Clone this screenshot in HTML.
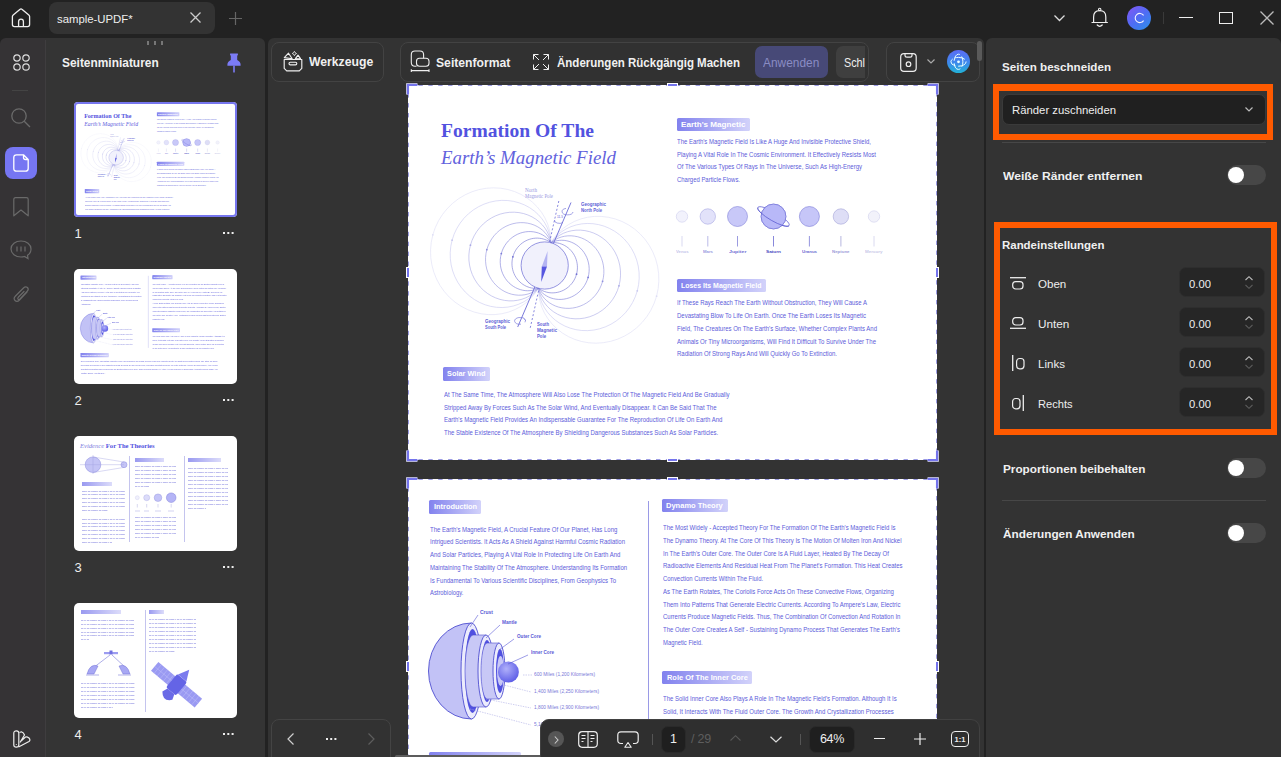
<!DOCTYPE html>
<html><head><meta charset="utf-8">
<style>
*{margin:0;padding:0;box-sizing:border-box}
html,body{width:1281px;height:757px;overflow:hidden;background:#222222;font-family:"Liberation Sans",sans-serif;color:#f2f2f2}
.a{position:absolute}
.panel{position:absolute;background:#323232}
.b{font-weight:bold}
svg{position:absolute;overflow:visible}
.tx{position:absolute;white-space:nowrap;transform-origin:0 0}
</style></head><body>
<!-- title bar -->
<div class="a" style="left:0;top:0;width:1281px;height:38px;background:#222222"></div>
<svg style="left:11px;top:8px" width="20" height="20" viewBox="0 0 20 20"><path d="M1.4 8.6 Q1.4 7.6 2.2 6.9 L8.8 1.4 Q10 0.5 11.2 1.4 L17.8 6.9 Q18.6 7.6 18.6 8.6 V16.6 Q18.6 18.6 16.6 18.6 H3.4 Q1.4 18.6 1.4 16.6 Z M7.6 18.6 V13.6 Q7.6 11.2 10 11.2 Q12.4 11.2 12.4 13.6 V18.6" fill="none" stroke="#eee" stroke-width="1.3" stroke-linejoin="round"/></svg>
<div class="a" style="left:49px;top:2px;width:166px;height:32px;background:#333;border-radius:8px"></div>
<svg style="left:190px;top:12px" width="11" height="11"><path d="M0.5 0.5 L10.5 10.5 M10.5 0.5 L0.5 10.5" stroke="#ccc" stroke-width="1.3"/></svg>
<svg style="left:229px;top:12px" width="13" height="13"><path d="M6.5 0 V13 M0 6.5 H13" stroke="#666" stroke-width="1.2"/></svg>
<svg style="left:1054px;top:15px" width="11" height="7"><path d="M0.5 0.5 L5.5 5.5 L10.5 0.5" fill="none" stroke="#ddd" stroke-width="1.3"/></svg>
<svg style="left:1090px;top:7px" width="20" height="21" viewBox="0 0 20 21"><circle cx="9.7" cy="2.4" r="1.2" fill="none" stroke="#eee" stroke-width="1.1"/><path d="M3.6 15.5 V10 Q3.6 3.6 9.7 3.6 Q15.8 3.6 15.8 10 V15.5 M2 15.5 H17.4 M7.2 18 Q9.7 20.6 12.2 18" fill="none" stroke="#eee" stroke-width="1.2" stroke-linejoin="round" stroke-linecap="round"/></svg>
<div class="a" style="left:1127px;top:6px;width:24px;height:24px;border-radius:50%;background:linear-gradient(140deg,#8656f4 0%,#4f6cf4 50%,#2a92e6 100%)"></div>
<svg style="left:1127px;top:6px" width="24" height="24"><path d="M16.6 14.6 A4.6 4.6 0 1 1 16.6 9.4" fill="none" stroke="#f4f4ff" stroke-width="1.1"/></svg>
<div class="a" style="left:1163px;top:12px;width:1px;height:12px;background:#3a3a3a"></div>
<div class="a" style="left:1179px;top:17px;width:14px;height:1.4px;background:#eee"></div>
<div class="a" style="left:1219px;top:12px;width:14px;height:12px;border:1.4px solid #eee"></div>
<svg style="left:1260px;top:11px" width="14" height="14"><path d="M0.5 0.5 L13.5 13.5 M13.5 0.5 L0.5 13.5" stroke="#bbb" stroke-width="1.3"/></svg>

<!-- left rail + thumbnail panel -->
<div class="panel" style="left:0;top:38px;width:265px;height:719px;border-radius:6px 6px 0 0;background:linear-gradient(90deg,#353335 0,#353335 45px,#343434 45px)"></div>
<div class="a" style="left:45px;top:40px;width:1px;height:717px;background:#3f3d3f"></div>

<!-- center panel -->
<div class="panel" style="left:268px;top:38px;width:716px;height:719px;background:#333;border-radius:6px 6px 0 0"></div>

<!-- right panel -->
<div class="panel" style="left:986px;top:38px;width:295px;height:719px;background:#333;border-radius:6px 6px 0 0"></div>



<div class="a" style="left:268px;top:81px;width:716px;height:676px;overflow:hidden">
<div class="a" style="left:140px;top:4px"><div class="a pg" style="left:0px;top:0px;width:529px;height:375px;background:#fff">
<div id="t1" class="tx" style="transform:scaleX(1.0040);left:33.00px;top:35.57px;font-size:19.50px;line-height:19.50px;color:#5252e0;font-family:'Liberation Serif',serif;font-weight:bold">Formation Of The</div>
<div id="t2" class="tx" style="transform:scaleX(1.0217);left:32.60px;top:64.11px;font-size:18.50px;line-height:18.50px;color:#6262dd;font-family:'Liberation Serif',serif;font-style:italic">Earth&#8217;s Magnetic Field</div>
<svg class="a" style="left:0;top:0" width="529" height="375"><path d="M142.94 157.74 L146.39 152.48 L150.53 147.63 L155.32 143.27 L160.69 139.49 L166.56 136.35 L172.86 133.93 L179.48 132.27 L186.33 131.42 L193.32 131.41 L200.32 132.25 L207.24 133.94 L213.97 136.47 L220.40 139.81 L226.44 143.92 L231.98 148.76 L236.94 154.25 L241.24 160.32 L244.81 166.89 L247.60 173.86 L249.55 181.14 L250.64 188.62 L250.84 196.18 L250.15 203.73 L248.58 211.16 L246.14 218.34 L242.89 225.19 L238.86 231.60 L234.11 237.48 L228.72 242.74 L222.77 247.32 L216.35 251.15 L209.55 254.18 L202.49 256.38 L195.26 257.71 L187.97 258.18 L180.73 257.77 L173.65 256.52 L166.84 254.44 L160.38 251.59 L154.38 248.02 L148.92 243.80 L144.06 239.00 L139.88 233.71 L136.43 228.01 L133.74 222.02 L131.85 215.83 L130.75 209.54 L130.46 203.26" fill="none" stroke="#dedef5" stroke-width="0.6"/><circle cx="248.58" cy="211.16" r="0.9" fill="#dedef5"/><path d="M142.94 157.74 L142.65 151.46 L141.55 145.17 L139.66 138.98 L136.97 132.99 L133.52 127.29 L129.34 122.00 L124.48 117.20 L119.02 112.98 L113.02 109.41 L106.56 106.56 L99.75 104.48 L92.67 103.23 L85.43 102.82 L78.14 103.29 L70.91 104.62 L63.85 106.82 L57.05 109.85 L50.63 113.68 L44.68 118.26 L39.29 123.52 L34.54 129.40 L30.51 135.81 L27.26 142.66 L24.82 149.84 L23.25 157.27 L22.56 164.82 L22.76 172.38 L23.85 179.86 L25.80 187.14 L28.59 194.11 L32.16 200.68 L36.46 206.75 L41.42 212.24 L46.96 217.08 L53.00 221.19 L59.43 224.53 L66.16 227.06 L73.08 228.75 L80.08 229.59 L87.07 229.58 L93.92 228.73 L100.54 227.07 L106.84 224.65 L112.71 221.51 L118.08 217.73 L122.87 213.37 L127.01 208.52 L130.46 203.26" fill="none" stroke="#dedef5" stroke-width="0.6"/><circle cx="24.82" cy="149.84" r="0.9" fill="#dedef5"/><path d="M142.94 157.74 L145.96 153.72 L149.52 150.04 L153.58 146.76 L158.08 143.95 L162.96 141.68 L168.16 139.97 L173.61 138.89 L179.22 138.46 L184.92 138.69 L190.62 139.61 L196.24 141.20 L201.68 143.47 L206.88 146.38 L211.74 149.91 L216.20 154.01 L220.18 158.64 L223.63 163.72 L226.48 169.20 L228.69 174.99 L230.23 181.03 L231.07 187.22 L231.19 193.49 L230.60 199.73 L229.29 205.87 L227.28 211.82 L224.61 217.50 L221.31 222.82 L217.44 227.72 L213.04 232.13 L208.18 235.99 L202.93 239.25 L197.38 241.87 L191.59 243.81 L185.67 245.07 L179.68 245.63 L173.73 245.48 L167.89 244.66 L162.24 243.17 L156.87 241.05 L151.85 238.35 L147.24 235.11 L143.11 231.40 L139.50 227.29 L136.46 222.84 L134.02 218.13 L132.20 213.24 L131.01 208.26 L130.46 203.26" fill="none" stroke="#c8c8f0" stroke-width="0.6"/><circle cx="229.29" cy="205.87" r="0.9" fill="#c8c8f0"/><path d="M142.94 157.74 L142.39 152.74 L141.20 147.76 L139.38 142.87 L136.94 138.16 L133.90 133.71 L130.29 129.60 L126.16 125.89 L121.55 122.65 L116.53 119.95 L111.16 117.83 L105.51 116.34 L99.67 115.52 L93.72 115.37 L87.73 115.93 L81.81 117.19 L76.02 119.13 L70.47 121.75 L65.22 125.01 L60.36 128.87 L55.96 133.28 L52.09 138.18 L48.79 143.50 L46.12 149.18 L44.11 155.13 L42.80 161.27 L42.21 167.51 L42.33 173.78 L43.17 179.97 L44.71 186.01 L46.92 191.80 L49.77 197.28 L53.22 202.36 L57.20 206.99 L61.66 211.09 L66.52 214.62 L71.72 217.53 L77.16 219.80 L82.78 221.39 L88.48 222.31 L94.18 222.54 L99.79 222.11 L105.24 221.03 L110.44 219.32 L115.32 217.05 L119.82 214.24 L123.88 210.96 L127.44 207.28 L130.46 203.26" fill="none" stroke="#c8c8f0" stroke-width="0.6"/><circle cx="44.11" cy="155.13" r="0.9" fill="#c8c8f0"/><path d="M142.94 157.74 L145.55 154.90 L148.56 152.32 L151.92 150.08 L155.59 148.20 L159.54 146.73 L163.70 145.72 L168.03 145.18 L172.47 145.13 L176.95 145.61 L181.41 146.60 L185.78 148.10 L190.01 150.12 L194.03 152.63 L197.79 155.60 L201.21 159.01 L204.27 162.80 L206.90 166.95 L209.06 171.39 L210.73 176.07 L211.88 180.93 L212.48 185.90 L212.53 190.92 L212.02 195.93 L210.96 200.85 L209.36 205.63 L207.25 210.19 L204.65 214.49 L201.59 218.46 L198.13 222.05 L194.31 225.23 L190.18 227.94 L185.81 230.17 L181.25 231.88 L176.56 233.06 L171.82 233.70 L167.08 233.81 L162.41 233.39 L157.88 232.46 L153.54 231.04 L149.44 229.16 L145.65 226.86 L142.20 224.19 L139.14 221.19 L136.49 217.92 L134.28 214.43 L132.54 210.79 L131.26 207.04 L130.46 203.26" fill="none" stroke="#aaaae6" stroke-width="0.6"/><circle cx="210.96" cy="200.85" r="0.9" fill="#aaaae6"/><path d="M142.94 157.74 L142.14 153.96 L140.86 150.21 L139.12 146.57 L136.91 143.08 L134.26 139.81 L131.20 136.81 L127.75 134.14 L123.96 131.84 L119.86 129.96 L115.52 128.54 L110.99 127.61 L106.32 127.19 L101.58 127.30 L96.84 127.94 L92.15 129.12 L87.59 130.83 L83.22 133.06 L79.09 135.77 L75.27 138.95 L71.81 142.54 L68.75 146.51 L66.15 150.81 L64.04 155.37 L62.44 160.15 L61.38 165.07 L60.87 170.08 L60.92 175.10 L61.52 180.07 L62.67 184.93 L64.34 189.61 L66.50 194.05 L69.13 198.20 L72.19 201.99 L75.61 205.40 L79.37 208.37 L83.39 210.88 L87.62 212.90 L91.99 214.40 L96.45 215.39 L100.93 215.87 L105.37 215.82 L109.70 215.28 L113.86 214.27 L117.81 212.80 L121.48 210.92 L124.84 208.68 L127.85 206.10 L130.46 203.26" fill="none" stroke="#aaaae6" stroke-width="0.6"/><circle cx="62.44" cy="160.15" r="0.9" fill="#aaaae6"/><path d="M142.94 157.74 L145.19 155.95 L147.70 154.37 L150.43 153.04 L153.37 152.00 L156.48 151.26 L159.71 150.86 L163.04 150.80 L166.42 151.11 L169.81 151.79 L173.16 152.85 L176.43 154.28 L179.57 156.07 L182.54 158.22 L185.30 160.69 L187.80 163.47 L190.02 166.53 L191.93 169.84 L193.48 173.35 L194.66 177.03 L195.46 180.83 L195.85 184.71 L195.83 188.63 L195.40 192.52 L194.57 196.36 L193.33 200.08 L191.71 203.65 L189.74 207.03 L187.42 210.17 L184.80 213.03 L181.90 215.60 L178.78 217.82 L175.46 219.70 L171.99 221.20 L168.41 222.31 L164.78 223.04 L161.13 223.37 L157.51 223.31 L153.97 222.87 L150.55 222.08 L147.29 220.94 L144.22 219.48 L141.39 217.74 L138.81 215.74 L136.51 213.52 L134.52 211.12 L132.84 208.59 L131.49 205.95 L130.46 203.26" fill="none" stroke="#9090de" stroke-width="0.6"/><circle cx="194.57" cy="196.36" r="0.9" fill="#9090de"/><path d="M142.94 157.74 L141.91 155.05 L140.56 152.41 L138.88 149.88 L136.89 147.48 L134.59 145.26 L132.01 143.26 L129.18 141.52 L126.11 140.06 L122.85 138.92 L119.43 138.13 L115.89 137.69 L112.27 137.63 L108.62 137.96 L104.99 138.69 L101.41 139.80 L97.94 141.30 L94.62 143.18 L91.50 145.40 L88.60 147.97 L85.98 150.83 L83.66 153.97 L81.69 157.35 L80.07 160.92 L78.83 164.64 L78.00 168.48 L77.57 172.37 L77.55 176.29 L77.94 180.17 L78.74 183.97 L79.92 187.65 L81.47 191.16 L83.38 194.47 L85.60 197.53 L88.10 200.31 L90.86 202.78 L93.83 204.93 L96.97 206.72 L100.24 208.15 L103.59 209.21 L106.98 209.89 L110.36 210.20 L113.69 210.14 L116.92 209.74 L120.03 209.00 L122.97 207.96 L125.70 206.63 L128.21 205.05 L130.46 203.26" fill="none" stroke="#9090de" stroke-width="0.6"/><circle cx="78.83" cy="164.64" r="0.9" fill="#9090de"/><path d="M142.94 157.74 L144.87 156.87 L146.94 156.17 L149.13 155.66 L151.41 155.35 L153.78 155.25 L156.19 155.39 L158.64 155.76 L161.09 156.38 L163.51 157.25 L165.88 158.37 L168.17 159.73 L170.35 161.32 L172.40 163.15 L174.28 165.18 L175.97 167.42 L177.46 169.83 L178.72 172.39 L179.73 175.08 L180.49 177.88 L180.97 180.75 L181.18 183.67 L181.10 186.60 L180.74 189.52 L180.10 192.39 L179.19 195.19 L178.01 197.88 L176.58 200.45 L174.91 202.85 L173.03 205.08 L170.96 207.10 L168.71 208.90 L166.32 210.46 L163.82 211.78 L161.22 212.83 L158.56 213.62 L155.88 214.15 L153.19 214.41 L150.52 214.42 L147.92 214.17 L145.39 213.68 L142.97 212.97 L140.67 212.04 L138.52 210.92 L136.53 209.64 L134.73 208.20 L133.11 206.65 L131.68 204.99 L130.46 203.26" fill="none" stroke="#7c7cd8" stroke-width="0.6"/><circle cx="180.10" cy="192.39" r="0.9" fill="#7c7cd8"/><path d="M142.94 157.74 L141.72 156.01 L140.29 154.35 L138.67 152.80 L136.87 151.36 L134.88 150.08 L132.73 148.96 L130.43 148.03 L128.01 147.32 L125.48 146.83 L122.88 146.58 L120.21 146.59 L117.52 146.85 L114.84 147.38 L112.18 148.17 L109.58 149.22 L107.08 150.54 L104.69 152.10 L102.44 153.90 L100.37 155.92 L98.49 158.15 L96.82 160.55 L95.39 163.12 L94.21 165.81 L93.30 168.61 L92.66 171.48 L92.30 174.40 L92.22 177.33 L92.43 180.25 L92.91 183.12 L93.67 185.92 L94.68 188.61 L95.94 191.17 L97.43 193.58 L99.12 195.82 L101.00 197.85 L103.05 199.68 L105.23 201.27 L107.52 202.63 L109.89 203.75 L112.31 204.62 L114.76 205.24 L117.21 205.61 L119.62 205.75 L121.99 205.65 L124.27 205.34 L126.46 204.83 L128.53 204.13 L130.46 203.26" fill="none" stroke="#7c7cd8" stroke-width="0.6"/><circle cx="93.30" cy="168.61" r="0.9" fill="#7c7cd8"/><path d="M142.94 157.74 L144.61 157.61 L146.33 157.62 L148.08 157.75 L149.84 158.03 L151.62 158.45 L153.38 159.02 L155.12 159.73 L156.82 160.60 L158.48 161.62 L160.06 162.78 L161.57 164.09 L162.98 165.53 L164.28 167.09 L165.46 168.78 L166.51 170.57 L167.41 172.46 L168.15 174.43 L168.73 176.47 L169.14 178.56 L169.38 180.69 L169.44 182.83 L169.31 184.98 L169.01 187.12 L168.53 189.22 L167.87 191.28 L167.04 193.27 L166.05 195.18 L164.91 197.00 L163.62 198.71 L162.20 200.30 L160.66 201.76 L159.02 203.07 L157.28 204.24 L155.47 205.25 L153.59 206.10 L151.67 206.78 L149.73 207.30 L147.77 207.65 L145.81 207.84 L143.87 207.88 L141.96 207.75 L140.10 207.48 L138.29 207.07 L136.55 206.53 L134.89 205.87 L133.32 205.10 L131.84 204.22 L130.46 203.26" fill="none" stroke="#7070d2" stroke-width="0.6"/><circle cx="168.53" cy="189.22" r="0.9" fill="#7070d2"/><path d="M142.94 157.74 L141.56 156.78 L140.08 155.90 L138.51 155.13 L136.85 154.47 L135.11 153.93 L133.30 153.52 L131.44 153.25 L129.53 153.12 L127.59 153.16 L125.63 153.35 L123.67 153.70 L121.73 154.22 L119.81 154.90 L117.93 155.75 L116.12 156.76 L114.38 157.93 L112.74 159.24 L111.20 160.70 L109.78 162.29 L108.49 164.00 L107.35 165.82 L106.36 167.73 L105.53 169.72 L104.87 171.78 L104.39 173.88 L104.09 176.02 L103.96 178.17 L104.02 180.31 L104.26 182.44 L104.67 184.53 L105.25 186.57 L105.99 188.54 L106.89 190.43 L107.94 192.22 L109.12 193.91 L110.42 195.47 L111.83 196.91 L113.34 198.22 L114.92 199.38 L116.58 200.40 L118.28 201.27 L120.02 201.98 L121.78 202.55 L123.56 202.97 L125.32 203.25 L127.07 203.38 L128.79 203.39 L130.46 203.26" fill="none" stroke="#7070d2" stroke-width="0.6"/><circle cx="104.87" cy="171.78" r="0.9" fill="#7070d2"/><path d="M163.0 117.5 L109.7 242.0" stroke="#6a6ad6" stroke-width="0.9"/><path d="M150.8 116.0 L122.0 244.0" stroke="#6a6ad6" stroke-width="0.8" stroke-dasharray="2 2"/><circle cx="136.70" cy="180.50" r="23.6" fill="#f1f1fc" stroke="#6a6ad4" stroke-width="0.7"/><path d="M139.6 166.0 L139.0 181.5 L133.8 181.5 Z" fill="#b4b4f2"/><path d="M133.2 197.0 L139.0 181.5 L133.8 181.5 Z" fill="#5656e0"/><path d="M158.0 123.4 A5.5 3.3 0 1 0 165.0 127.0" fill="none" stroke="#6a6ad6" stroke-width="0.6"/><path d="M146.5 135.0 A5 3 0 0 0 155.0 137.5" fill="none" stroke="#6a6ad6" stroke-width="0.6"/><path d="M117.6 235.0 A5.6 3.4 0 1 0 113.0 239.2" fill="none" stroke="#6a6ad6" stroke-width="0.6"/><path d="M115.5 233.5 L117.6 235.0 L117.0 237.3" fill="none" stroke="#6a6ad6" stroke-width="0.6"/></svg>
<div id="t3" class="tx" style="transform:scaleX(0.9540);left:117.00px;top:103.48px;font-size:5.40px;line-height:5.40px;color:#9a9ae2;font-family:'Liberation Serif',serif">North</div>
<div id="t4" class="tx" style="transform:scaleX(0.8947);left:117.00px;top:109.38px;font-size:5.40px;line-height:5.40px;color:#9a9ae2;font-family:'Liberation Serif',serif">Magnetic Pole</div>
<div id="t5" class="tx" style="transform:scaleX(0.9792);left:173.00px;top:117.61px;font-size:4.60px;line-height:4.60px;color:#6060d6;font-family:'Liberation Sans',sans-serif;font-weight:bold">Geographic</div>
<div id="t6" class="tx" style="transform:scaleX(0.9038);left:173.00px;top:123.61px;font-size:4.60px;line-height:4.60px;color:#6060d6;font-family:'Liberation Sans',sans-serif;font-weight:bold">North Pole</div>
<div id="t7" class="tx" style="transform:scaleX(0.9792);left:77.00px;top:234.61px;font-size:4.60px;line-height:4.60px;color:#6060d6;font-family:'Liberation Sans',sans-serif;font-weight:bold">Geographic</div>
<div id="t8" class="tx" style="transform:scaleX(0.8750);left:77.00px;top:240.61px;font-size:4.60px;line-height:4.60px;color:#6060d6;font-family:'Liberation Sans',sans-serif;font-weight:bold">South Pole</div>
<div id="t9" class="tx" style="transform:scaleX(0.9220);left:128.80px;top:237.61px;font-size:4.60px;line-height:4.60px;color:#6060d6;font-family:'Liberation Sans',sans-serif;font-weight:bold">South</div>
<div id="t10" class="tx" style="transform:scaleX(1.0039);left:128.80px;top:243.61px;font-size:4.60px;line-height:4.60px;color:#6060d6;font-family:'Liberation Sans',sans-serif;font-weight:bold">Magnetic</div>
<div id="t11" class="tx" style="transform:scaleX(0.9275);left:128.80px;top:249.61px;font-size:4.60px;line-height:4.60px;color:#6060d6;font-family:'Liberation Sans',sans-serif;font-weight:bold">Pole</div>
<div id="t12" class="tx" style="transform:scaleX(0.7649);left:149.00px;top:129.94px;font-size:4.20px;line-height:4.20px;color:#6060d6;font-family:'Liberation Sans',sans-serif">11.5</div>
<div class="a" style="left:269.0px;top:32.7px;width:73.0px;height:13.3px;border-radius:1.5px;background:linear-gradient(90deg,#8282ee,#d2d2fa)"></div>
<div id="t13" class="tx" style="transform:scaleX(1.0650);left:273.20px;top:35.65px;font-size:7.60px;line-height:7.60px;color:#fff;font-family:'Liberation Sans',sans-serif;font-weight:bold">Earth's Magnetic</div>
<div id="t14" class="tx" style="transform:scaleX(0.9057);left:269.00px;top:53.71px;font-size:6.60px;line-height:6.60px;color:#5c5cda;font-family:'Liberation Sans',sans-serif">The Earth's Magnetic Field Is Like A Huge And Invisible Protective Shield,</div>
<div id="t15" class="tx" style="transform:scaleX(0.9095);left:269.00px;top:66.61px;font-size:6.60px;line-height:6.60px;color:#5c5cda;font-family:'Liberation Sans',sans-serif">Playing A Vital Role In The Cosmic Environment. It Effectively Resists Most</div>
<div id="t16" class="tx" style="transform:scaleX(0.9101);left:269.00px;top:79.11px;font-size:6.60px;line-height:6.60px;color:#5c5cda;font-family:'Liberation Sans',sans-serif">Of The Various Types Of Rays In The Universe, Such As High-Energy</div>
<div id="t17" class="tx" style="transform:scaleX(0.9000);left:269.00px;top:92.01px;font-size:6.60px;line-height:6.60px;color:#5c5cda;font-family:'Liberation Sans',sans-serif">Charged Particle Flows.</div>
<svg class="a" style="left:0;top:0" width="529" height="375"><circle cx="274.0" cy="131.5" r="5.7" fill="#f2f2fc" stroke="#cfcfee" stroke-width="0.6"/><path d="M274.0 151 V161.5" stroke="#cfcfee" stroke-width="0.8"/><circle cx="299.8" cy="131.5" r="7.7" fill="#e2e2fa" stroke="#a8a8e2" stroke-width="0.6"/><path d="M299.8 151 V161.5" stroke="#a8a8e2" stroke-width="0.8"/><circle cx="329.5" cy="131.5" r="10.0" fill="#c8c8f8" stroke="#8282d8" stroke-width="0.6"/><path d="M329.5 151 V161.5" stroke="#8282d8" stroke-width="0.8"/><circle cx="365.5" cy="131.5" r="12.4" fill="#b8b8f8" stroke="#6a6ad2" stroke-width="0.6"/><path d="M365.5 151 V161.5" stroke="#6a6ad2" stroke-width="0.8"/><circle cx="401.4" cy="131.5" r="10.0" fill="#c6c6f8" stroke="#7a7ad6" stroke-width="0.6"/><path d="M401.4 151 V161.5" stroke="#7a7ad6" stroke-width="0.8"/><circle cx="432.9" cy="131.5" r="7.7" fill="#dedef6" stroke="#a4a4d8" stroke-width="0.6"/><path d="M432.9 151 V161.5" stroke="#a4a4d8" stroke-width="0.8"/><circle cx="466.0" cy="131.5" r="5.7" fill="#f2f2fa" stroke="#d0d0ec" stroke-width="0.6"/><path d="M466.0 151 V161.5" stroke="#d0d0ec" stroke-width="0.8"/><g transform="rotate(30 365.5 131.5)"><ellipse cx="365.5" cy="131.5" rx="18" ry="4.4" fill="none" stroke="#5a5ad0" stroke-width="0.7"/><circle cx="365.5" cy="131.5" r="12.4" transform="rotate(-30 365.5 131.5)" fill="#b8b8f8" stroke="#6a6ad2" stroke-width="0.6"/><path d="M347.5 131.5 A18 4.4 0 0 0 383.5 131.5" fill="none" stroke="#5a5ad0" stroke-width="0.7"/></g></svg>
<div id="t18" class="tx" style="transform:scaleX(0.9662);left:267.75px;top:164.88px;font-size:4.40px;line-height:4.40px;color:#c4c4ea;font-family:'Liberation Sans',sans-serif;font-weight:bold">Venus</div>
<div id="t19" class="tx" style="transform:scaleX(0.9756);left:294.80px;top:164.88px;font-size:4.40px;line-height:4.40px;color:#9a9ae0;font-family:'Liberation Sans',sans-serif;font-weight:bold">Mars</div>
<div id="t20" class="tx" style="transform:scaleX(1.1953);left:320.75px;top:164.88px;font-size:4.40px;line-height:4.40px;color:#7070d4;font-family:'Liberation Sans',sans-serif;font-weight:bold">Jupiter</div>
<div id="t21" class="tx" style="transform:scaleX(1.0787);left:358.00px;top:164.88px;font-size:4.40px;line-height:4.40px;color:#4848c0;font-family:'Liberation Sans',sans-serif;font-weight:bold">Saturn</div>
<div id="t22" class="tx" style="transform:scaleX(0.9907);left:393.90px;top:164.88px;font-size:4.40px;line-height:4.40px;color:#6a6ad0;font-family:'Liberation Sans',sans-serif;font-weight:bold">Uranus</div>
<div id="t23" class="tx" style="transform:scaleX(0.9956);left:424.15px;top:164.88px;font-size:4.40px;line-height:4.40px;color:#9a9ad8;font-family:'Liberation Sans',sans-serif;font-weight:bold">Neptune</div>
<div id="t24" class="tx" style="transform:scaleX(1.0238);left:457.25px;top:164.88px;font-size:4.40px;line-height:4.40px;color:#c8c8e8;font-family:'Liberation Sans',sans-serif;font-weight:bold">Mercury</div>
<div class="a" style="left:269.0px;top:194.4px;width:89.0px;height:13.0px;border-radius:1.5px;background:linear-gradient(90deg,#8282ee,#d2d2fa)"></div>
<div id="t25" class="tx" style="transform:scaleX(0.9159);left:273.20px;top:197.20px;font-size:7.60px;line-height:7.60px;color:#fff;font-family:'Liberation Sans',sans-serif;font-weight:bold">Loses Its Magnetic Field</div>
<div id="t26" class="tx" style="transform:scaleX(0.9079);left:269.00px;top:215.41px;font-size:6.60px;line-height:6.60px;color:#5c5cda;font-family:'Liberation Sans',sans-serif">If These Rays Reach The Earth Without Obstruction, They Will Cause A</div>
<div id="t27" class="tx" style="transform:scaleX(0.9121);left:269.00px;top:228.31px;font-size:6.60px;line-height:6.60px;color:#5c5cda;font-family:'Liberation Sans',sans-serif">Devastating Blow To Life On Earth. Once The Earth Loses Its Magnetic</div>
<div id="t28" class="tx" style="transform:scaleX(0.9083);left:269.00px;top:241.21px;font-size:6.60px;line-height:6.60px;color:#5c5cda;font-family:'Liberation Sans',sans-serif">Field, The Creatures On The Earth's Surface, Whether Complex Plants And</div>
<div id="t29" class="tx" style="transform:scaleX(0.9127);left:269.00px;top:253.71px;font-size:6.60px;line-height:6.60px;color:#5c5cda;font-family:'Liberation Sans',sans-serif">Animals Or Tiny Microorganisms, Will Find It Difficult To Survive Under The</div>
<div id="t30" class="tx" style="transform:scaleX(0.9121);left:269.00px;top:266.41px;font-size:6.60px;line-height:6.60px;color:#5c5cda;font-family:'Liberation Sans',sans-serif">Radiation Of Strong Rays And Will Quickly Go To Extinction.</div>
<div class="a" style="left:35.0px;top:282.3px;width:47.0px;height:13.3px;border-radius:1.5px;background:linear-gradient(90deg,#8282ee,#d2d2fa)"></div>
<div id="t31" class="tx" style="transform:scaleX(0.9699);left:39.20px;top:285.25px;font-size:7.60px;line-height:7.60px;color:#fff;font-family:'Liberation Sans',sans-serif;font-weight:bold">Solar Wind</div>
<div id="t32" class="tx" style="transform:scaleX(0.9104);left:35.50px;top:307.01px;font-size:6.60px;line-height:6.60px;color:#5c5cda;font-family:'Liberation Sans',sans-serif">At The Same Time, The Atmosphere Will Also Lose The Protection Of The Magnetic Field And Be Gradually</div>
<div id="t33" class="tx" style="transform:scaleX(0.9092);left:35.50px;top:319.81px;font-size:6.60px;line-height:6.60px;color:#5c5cda;font-family:'Liberation Sans',sans-serif">Stripped Away By Forces Such As The Solar Wind, And Eventually Disappear. It Can Be Said That The</div>
<div id="t34" class="tx" style="transform:scaleX(0.9092);left:35.50px;top:332.41px;font-size:6.60px;line-height:6.60px;color:#5c5cda;font-family:'Liberation Sans',sans-serif">Earth's Magnetic Field Provides An Indispensable Guarantee For The Reproduction Of Life On Earth And</div>
<div id="t35" class="tx" style="transform:scaleX(0.9071);left:35.50px;top:345.21px;font-size:6.60px;line-height:6.60px;color:#5c5cda;font-family:'Liberation Sans',sans-serif">The Stable Existence Of The Atmosphere By Shielding Dangerous Substances Such As Solar Particles.</div>
<svg class="a" style="left:0;top:0" width="529" height="375"><rect x="0.5" y="0.5" width="528" height="374" fill="none" stroke="#9c9ce4" stroke-width="1" stroke-dasharray="4.4 5.5"/></svg>
<svg class="a" style="left:0;top:0;overflow:visible" width="529" height="375"><path d="M9.4 -0.1 L-0.1 -0.1 L-0.1 9.4 M519.6 -0.1 L529.1 -0.1 L529.1 9.4 M9.4 375.1 L-0.1 375.1 L-0.1 365.6 M519.6 375.1 L529.1 375.1 L529.1 365.6" fill="none" stroke="#fff" stroke-width="3.4"/><path d="M9.4 -0.1 L-0.1 -0.1 L-0.1 9.4 M519.6 -0.1 L529.1 -0.1 L529.1 9.4 M9.4 375.1 L-0.1 375.1 L-0.1 365.6 M519.6 375.1 L529.1 375.1 L529.1 365.6" fill="none" stroke="#7474ec" stroke-width="2.3"/><rect x="259.5" y="-1.5" width="10.0" height="3.0" fill="#7474ec" stroke="#fff" stroke-width="1"/><rect x="259.5" y="373.5" width="10.0" height="3.0" fill="#7474ec" stroke="#fff" stroke-width="1"/><rect x="-1.5" y="182.5" width="3.0" height="10.0" fill="#7474ec" stroke="#fff" stroke-width="1"/><rect x="527.5" y="182.5" width="3.0" height="10.0" fill="#7474ec" stroke="#fff" stroke-width="1"/></svg>
</div>
</div><div class="a" style="left:140px;top:398px"><div class="a pg" style="left:0px;top:0px;width:529px;height:375px;background:#fff">
<div class="a" style="left:21.3px;top:21.4px;width:51.7px;height:13.3px;border-radius:1.5px;background:linear-gradient(90deg,#8282ee,#d2d2fa)"></div>
<div id="t36" class="tx" style="transform:scaleX(0.9730);left:25.50px;top:24.35px;font-size:7.60px;line-height:7.60px;color:#fff;font-family:'Liberation Sans',sans-serif;font-weight:bold">Introduction</div>
<div id="t37" class="tx" style="transform:scaleX(0.9070);left:21.70px;top:47.51px;font-size:6.60px;line-height:6.60px;color:#5c5cda;font-family:'Liberation Sans',sans-serif">The Earth's Magnetic Field, A Crucial Feature Of Our Planet, Has Long</div>
<div id="t38" class="tx" style="transform:scaleX(0.9111);left:21.70px;top:60.11px;font-size:6.60px;line-height:6.60px;color:#5c5cda;font-family:'Liberation Sans',sans-serif">Intrigued Scientists. It Acts As A Shield Against Harmful Cosmic Radiation</div>
<div id="t39" class="tx" style="transform:scaleX(0.9082);left:21.70px;top:73.01px;font-size:6.60px;line-height:6.60px;color:#5c5cda;font-family:'Liberation Sans',sans-serif">And Solar Particles, Playing A Vital Role In Protecting Life On Earth And</div>
<div id="t40" class="tx" style="transform:scaleX(0.9063);left:21.70px;top:85.71px;font-size:6.60px;line-height:6.60px;color:#5c5cda;font-family:'Liberation Sans',sans-serif">Maintaining The Stability Of The Atmosphere. Understanding Its Formation</div>
<div id="t41" class="tx" style="transform:scaleX(0.9145);left:21.70px;top:98.71px;font-size:6.60px;line-height:6.60px;color:#5c5cda;font-family:'Liberation Sans',sans-serif">Is Fundamental To Various Scientific Disciplines, From Geophysics To</div>
<div id="t42" class="tx" style="transform:scaleX(0.8847);left:21.70px;top:111.21px;font-size:6.60px;line-height:6.60px;color:#5c5cda;font-family:'Liberation Sans',sans-serif">Astrobiology.</div>
<div class="a" style="left:240px;top:22px;width:1px;height:234px;background:#9a9ae6"></div>
<div class="a" style="left:254.2px;top:20.2px;width:65.4px;height:13.0px;border-radius:1.5px;background:linear-gradient(90deg,#8282ee,#d2d2fa)"></div>
<div id="t43" class="tx" style="transform:scaleX(0.9897);left:258.40px;top:23.00px;font-size:7.60px;line-height:7.60px;color:#fff;font-family:'Liberation Sans',sans-serif;font-weight:bold">Dynamo Theory</div>
<div id="t44" class="tx" style="transform:scaleX(0.9074);left:254.80px;top:46.11px;font-size:6.60px;line-height:6.60px;color:#5c5cda;font-family:'Liberation Sans',sans-serif">The Most Widely - Accepted Theory For The Formation Of The Earth's Magnetic Field Is</div>
<div id="t45" class="tx" style="transform:scaleX(0.9114);left:254.80px;top:58.91px;font-size:6.60px;line-height:6.60px;color:#5c5cda;font-family:'Liberation Sans',sans-serif">The Dynamo Theory. At The Core Of This Theory Is The Motion Of Molten Iron And Nickel</div>
<div id="t46" class="tx" style="transform:scaleX(0.9108);left:254.80px;top:71.61px;font-size:6.60px;line-height:6.60px;color:#5c5cda;font-family:'Liberation Sans',sans-serif">In The Earth's Outer Core. The Outer Core Is A Fluid Layer, Heated By The Decay Of</div>
<div id="t47" class="tx" style="transform:scaleX(0.9083);left:254.80px;top:84.21px;font-size:6.60px;line-height:6.60px;color:#5c5cda;font-family:'Liberation Sans',sans-serif">Radioactive Elements And Residual Heat From The Planet's Formation. This Heat Creates</div>
<div id="t48" class="tx" style="transform:scaleX(0.8994);left:254.80px;top:97.11px;font-size:6.60px;line-height:6.60px;color:#5c5cda;font-family:'Liberation Sans',sans-serif">Convection Currents Within The Fluid.</div>
<div id="t49" class="tx" style="transform:scaleX(0.9078);left:254.80px;top:109.71px;font-size:6.60px;line-height:6.60px;color:#5c5cda;font-family:'Liberation Sans',sans-serif">As The Earth Rotates, The Coriolis Force Acts On These Convective Flows, Organizing</div>
<div id="t50" class="tx" style="transform:scaleX(0.9126);left:254.80px;top:122.81px;font-size:6.60px;line-height:6.60px;color:#5c5cda;font-family:'Liberation Sans',sans-serif">Them Into Patterns That Generate Electric Currents. According To Ampere's Law, Electric</div>
<div id="t51" class="tx" style="transform:scaleX(0.9055);left:254.80px;top:135.41px;font-size:6.60px;line-height:6.60px;color:#5c5cda;font-family:'Liberation Sans',sans-serif">Currents Produce Magnetic Fields. Thus, The Combination Of Convection And Rotation In</div>
<div id="t52" class="tx" style="transform:scaleX(0.9085);left:254.80px;top:148.21px;font-size:6.60px;line-height:6.60px;color:#5c5cda;font-family:'Liberation Sans',sans-serif">The Outer Core Creates A Self - Sustaining Dynamo Process That Generates The Earth's</div>
<div id="t53" class="tx" style="transform:scaleX(0.8878);left:254.80px;top:160.91px;font-size:6.60px;line-height:6.60px;color:#5c5cda;font-family:'Liberation Sans',sans-serif">Magnetic Field.</div>
<div class="a" style="left:254.3px;top:192.2px;width:89.5px;height:12.8px;border-radius:1.5px;background:linear-gradient(90deg,#8282ee,#d2d2fa)"></div>
<div id="t54" class="tx" style="transform:scaleX(0.9782);left:258.50px;top:194.90px;font-size:7.60px;line-height:7.60px;color:#fff;font-family:'Liberation Sans',sans-serif;font-weight:bold">Role Of The Inner Core</div>
<div id="t55" class="tx" style="transform:scaleX(0.9094);left:254.80px;top:216.81px;font-size:6.60px;line-height:6.60px;color:#5c5cda;font-family:'Liberation Sans',sans-serif">The Solid Inner Core Also Plays A Role In The Magnetic Field's Formation. Although It Is</div>
<div id="t56" class="tx" style="transform:scaleX(0.9067);left:254.80px;top:230.01px;font-size:6.60px;line-height:6.60px;color:#5c5cda;font-family:'Liberation Sans',sans-serif">Solid, It Interacts With The Fluid Outer Core. The Growth And Crystallization Processes</div>
<div id="t57" class="tx" style="transform:scaleX(0.8800);left:254.80px;top:242.81px;font-size:6.60px;line-height:6.60px;color:#5c5cda;font-family:'Liberation Sans',sans-serif">Of The Inner Core Release Heat And Light Elements, Which Further Drive The Convection</div>
<div id="t58" class="tx" style="transform:scaleX(0.8763);left:254.80px;top:255.61px;font-size:6.60px;line-height:6.60px;color:#5c5cda;font-family:'Liberation Sans',sans-serif">In The Outer Core And Contribute To The Maintenance Of The Magnetic Field.</div>
<svg class="a" style="left:0;top:0" width="529" height="375"><path d="M63.5 144.0 A43 48 0 0 0 63.5 240.0 Z" fill="#c2c2f6" stroke="#4e4ed0" stroke-width="0.9"/><ellipse cx="63.5" cy="192.0" rx="10.5" ry="48" fill="#ececfc" stroke="#4e4ed0" stroke-width="0.9"/><ellipse cx="64.5" cy="192.0" rx="7.5" ry="42" fill="#5050e0"/><ellipse cx="65" cy="192.0" rx="8" ry="36" fill="#c8c8f6" stroke="#4e4ed0" stroke-width="0.6"/><path d="M65 156.0 H78 V228.0 H65 Z" fill="#c8c8f6"/><path d="M65 156.0 H78 M65 228.0 H78" stroke="#4e4ed0" stroke-width="0.6"/><ellipse cx="78" cy="192.0" rx="8" ry="36" fill="#ececfc" stroke="#4e4ed0" stroke-width="0.9"/><ellipse cx="79" cy="192.0" rx="5.5" ry="31" fill="#5050e0"/><ellipse cx="79" cy="192.0" rx="6" ry="28" fill="#c8c8f6" stroke="#4e4ed0" stroke-width="0.6"/><path d="M79 164.0 H91 V220.0 H79 Z" fill="#c8c8f6"/><path d="M79 164.0 H91 M79 220.0 H91" stroke="#4e4ed0" stroke-width="0.6"/><ellipse cx="91" cy="192.0" rx="6" ry="28" fill="#ececfc" stroke="#4e4ed0" stroke-width="0.9"/><ellipse cx="92" cy="192.0" rx="4" ry="22" fill="#5050e0"/><ellipse cx="92.5" cy="192.0" rx="3.5" ry="15" fill="#c8c8f6"/><defs><radialGradient id="ic" cx="0.4" cy="0.35" r="0.7"><stop offset="0" stop-color="#b0b0fa"/><stop offset="1" stop-color="#5a5ae6"/></radialGradient></defs><circle cx="100.4" cy="193.0" r="10.5" fill="url(#ic)"/><path d="M62.0 148.0 L70.0 136.0" stroke="#5a5ad6" stroke-width="0.6"/><path d="M78.0 159.0 L92.0 146.0" stroke="#5a5ad6" stroke-width="0.6"/><path d="M91.0 171.0 L106.0 160.0" stroke="#5a5ad6" stroke-width="0.6"/><path d="M100.0 185.0 L120.0 176.0" stroke="#5a5ad6" stroke-width="0.6"/><path d="M115.0 196.0 L124.0 196.0" stroke="#b0b0e6" stroke-width="0.6" stroke-dasharray="1.5 1"/><path d="M92.0 205.0 L123.0 213.0" stroke="#b0b0e6" stroke-width="0.6" stroke-dasharray="1.5 1"/><path d="M78.0 220.0 L123.0 229.0" stroke="#b0b0e6" stroke-width="0.6" stroke-dasharray="1.5 1"/><path d="M62.0 230.0 L123.0 246.0" stroke="#b0b0e6" stroke-width="0.6" stroke-dasharray="1.5 1"/></svg>
<div id="t59" class="tx" style="transform:scaleX(1.0833);left:72.40px;top:132.11px;font-size:4.60px;line-height:4.60px;color:#5a5ad6;font-family:'Liberation Sans',sans-serif;font-weight:bold">Crust</div>
<div id="t60" class="tx" style="transform:scaleX(1.0300);left:94.40px;top:142.41px;font-size:4.60px;line-height:4.60px;color:#5a5ad6;font-family:'Liberation Sans',sans-serif;font-weight:bold">Mantle</div>
<div id="t61" class="tx" style="transform:scaleX(1.0000);left:109.00px;top:156.31px;font-size:4.60px;line-height:4.60px;color:#5a5ad6;font-family:'Liberation Sans',sans-serif;font-weight:bold">Outer Core</div>
<div id="t62" class="tx" style="transform:scaleX(1.0007);left:122.70px;top:171.81px;font-size:4.60px;line-height:4.60px;color:#5a5ad6;font-family:'Liberation Sans',sans-serif;font-weight:bold">Inner Core</div>
<div id="t63" class="tx" style="transform:scaleX(1.0433);left:126.20px;top:193.81px;font-size:4.60px;line-height:4.60px;color:#7a7ad8;font-family:'Liberation Sans',sans-serif">600 Miles (1,200 Kilometers)</div>
<div id="t64" class="tx" style="transform:scaleX(1.0431);left:126.20px;top:210.61px;font-size:4.60px;line-height:4.60px;color:#7a7ad8;font-family:'Liberation Sans',sans-serif">1,400 Miles (2,250 Kilometers)</div>
<div id="t65" class="tx" style="transform:scaleX(1.0431);left:126.20px;top:226.81px;font-size:4.60px;line-height:4.60px;color:#7a7ad8;font-family:'Liberation Sans',sans-serif">1,800 Miles (2,900 Kilometers)</div>
<div id="t66" class="tx" style="transform:scaleX(1.0431);left:126.20px;top:243.81px;font-size:4.60px;line-height:4.60px;color:#7a7ad8;font-family:'Liberation Sans',sans-serif">5,100 Miles (8,200 Kilometers)</div>
<div class="a" style="left:21.0px;top:272.6px;width:92.0px;height:13.0px;border-radius:1.5px;background:linear-gradient(90deg,#8282ee,#d2d2fa)"></div>
<div id="t67" class="tx" style="transform:scaleX(0.7134);left:25.20px;top:275.40px;font-size:7.60px;line-height:7.60px;color:#fff;font-family:'Liberation Sans',sans-serif;font-weight:bold">Magnetic Reversal Phenomenon</div>
<div id="t68" class="tx" style="transform:scaleX(0.9191);left:21.70px;top:297.21px;font-size:6.60px;line-height:6.60px;color:#5c5cda;font-family:'Liberation Sans',sans-serif">Over Geological Time, The Earth's Magnetic Field Has Undergone Reversals, During Which The Magnetic North And South Poles Switch Places. The Study Of These</div>
<div id="t69" class="tx" style="transform:scaleX(0.8987);left:21.70px;top:309.81px;font-size:6.60px;line-height:6.60px;color:#5c5cda;font-family:'Liberation Sans',sans-serif">Reversals Is Recorded In The Magnetic Minerals Of Rocks On The Ocean Floor, Providing Important Evidence For Plate Tectonics And The Dynamo Theory, And Helping</div>
<div id="t70" class="tx" style="transform:scaleX(0.8945);left:21.70px;top:322.61px;font-size:6.60px;line-height:6.60px;color:#5c5cda;font-family:'Liberation Sans',sans-serif">Scientists Understand The Dynamics Of The Earth's Interior Over Time. Such Reversals Remain An Active Area Of Research In Geophysics And Earth Science Today And</div>
<div id="t71" class="tx" style="transform:scaleX(1.7095);left:21.70px;top:335.21px;font-size:6.60px;line-height:6.60px;color:#5c5cda;font-family:'Liberation Sans',sans-serif">Into The Future.</div>
<svg class="a" style="left:0;top:0" width="529" height="375"><rect x="0.5" y="0.5" width="528" height="374" fill="none" stroke="#9c9ce4" stroke-width="1" stroke-dasharray="4.4 5.5"/></svg>
<svg class="a" style="left:0;top:0;overflow:visible" width="529" height="375"><path d="M9.4 -0.1 L-0.1 -0.1 L-0.1 9.4 M519.6 -0.1 L529.1 -0.1 L529.1 9.4 M9.4 375.1 L-0.1 375.1 L-0.1 365.6 M519.6 375.1 L529.1 375.1 L529.1 365.6" fill="none" stroke="#fff" stroke-width="3.4"/><path d="M9.4 -0.1 L-0.1 -0.1 L-0.1 9.4 M519.6 -0.1 L529.1 -0.1 L529.1 9.4 M9.4 375.1 L-0.1 375.1 L-0.1 365.6 M519.6 375.1 L529.1 375.1 L529.1 365.6" fill="none" stroke="#7474ec" stroke-width="2.3"/><rect x="259.5" y="-1.5" width="10.0" height="3.0" fill="#7474ec" stroke="#fff" stroke-width="1"/><rect x="259.5" y="373.5" width="10.0" height="3.0" fill="#7474ec" stroke="#fff" stroke-width="1"/><rect x="-1.5" y="182.5" width="3.0" height="10.0" fill="#7474ec" stroke="#fff" stroke-width="1"/><rect x="527.5" y="182.5" width="3.0" height="10.0" fill="#7474ec" stroke="#fff" stroke-width="1"/></svg>
</div>
</div></div>
<!-- bottom nav -->
<div class="a" style="left:271px;top:719px;width:120px;height:50px;border:1px solid #444;border-radius:8px;background:#323232"></div>
<svg style="left:287px;top:733px" width="8" height="12"><path d="M6.5 0.5 L1 6 L6.5 11.5" fill="none" stroke="#cfcfcf" stroke-width="1.2"/></svg>
<div class="a" style="left:325.6px;top:738px;width:2.2px;height:2.2px;background:#eee;box-shadow:4.2px 0 0 #eee,8.4px 0 0 #eee"></div>
<svg style="left:367px;top:733px" width="8" height="12"><path d="M1.5 0.5 L7 6 L1.5 11.5" fill="none" stroke="#5e5e5e" stroke-width="1.2"/></svg>
<div class="a" style="left:395px;top:754.5px;width:560px;height:3px;border-radius:2px;background:#5c5c5c"></div>
<!-- bottom toolbar -->
<div class="a" style="left:540px;top:719px;width:440px;height:50px;border:1px solid #414141;border-radius:9px;background:#2f2f2f"></div>
<div class="a" style="left:548px;top:731px;width:16px;height:16px;border-radius:50%;background:#565656"></div>
<svg style="left:554px;top:735.5px" width="5" height="8"><path d="M0.8 0.5 L4 4 L0.8 7.5" fill="none" stroke="#ccc" stroke-width="1.1"/></svg>
<svg style="left:578px;top:731px" width="20" height="17" viewBox="0 0 20 17"><rect x="0.7" y="0.7" width="18.6" height="15.6" rx="3.5" fill="none" stroke="#eee" stroke-width="1.2"/><path d="M10 0.7 V16.3 M3.5 4.5 H7.5 M3.5 7.5 H7.5 M3.5 10.5 H5.5 M12.5 4.5 H16.5 M12.5 7.5 H16.5 M12.5 10.5 H14.5" stroke="#eee" stroke-width="1.1"/></svg>
<svg style="left:617px;top:731px" width="22" height="17" viewBox="0 0 22 17"><path d="M6 12.5 H4 Q0.8 12.5 0.8 9.3 V4 Q0.8 0.8 4 0.8 H18 Q21.2 0.8 21.2 4 V9.3 Q21.2 12.5 18 12.5 H16" fill="none" stroke="#eee" stroke-width="1.2"/><path d="M11 11.5 L14.2 16.2 H7.8 Z" fill="none" stroke="#eee" stroke-width="1.1" stroke-linejoin="round"/></svg>
<div class="a" style="left:652px;top:733.5px;width:1px;height:11px;background:#555"></div>
<div class="a" style="left:661px;top:725.5px;width:25px;height:27px;border-radius:7px;background:#1f1f1f;border:1px solid #2a2a2a"></div>
<div class="a" style="left:661px;top:732px;width:25px;text-align:center;font-size:12.5px;line-height:14px;color:#eee">1</div>
<div class="a" style="left:691px;top:732px;font-size:12.5px;line-height:14px;color:#5e5e5e;letter-spacing:-0.2px">/ 29</div>
<svg style="left:730px;top:735px" width="11" height="6"><path d="M0.5 5.5 L5.5 0.7 L10.5 5.5" fill="none" stroke="#585858" stroke-width="1.1"/></svg>
<svg style="left:769.5px;top:736px" width="12" height="7"><path d="M0.5 0.7 L6 6 L11.5 0.7" fill="none" stroke="#ddd" stroke-width="1.2"/></svg>
<div class="a" style="left:799.5px;top:733.5px;width:1px;height:11px;background:#555"></div>
<div class="a" style="left:809px;top:725.5px;width:46px;height:27px;border-radius:7px;background:#1f1f1f;border:1px solid #2a2a2a"></div>
<div class="a" style="left:809px;top:732.3px;width:46px;text-align:center;font-size:12.5px;line-height:14px;color:#eee;letter-spacing:-0.3px">64%</div>
<div class="a" style="left:873.8px;top:738px;width:11px;height:1.2px;background:#eee"></div>
<svg style="left:913.5px;top:733px" width="12" height="12"><path d="M6 0 V12 M0 6 H12" stroke="#eee" stroke-width="1.2"/></svg>
<div class="a" style="left:951px;top:731px;width:18px;height:16px;border:1.2px solid #eee;border-radius:4px"></div>
<div class="a" style="left:951px;top:734.5px;width:18px;text-align:center;font-size:7.5px;line-height:9px;font-weight:bold;color:#eee">1:1</div>
<div class="a" style="left:74px;top:102px;width:163px;height:115px;background:#fff;border-radius:4px;overflow:hidden"><div class="a" style="left:0;top:0;width:529px;height:375px;transform:scale(0.30813);transform-origin:0 0"><div class="tx" style="transform:scaleX(1.0040);left:33.00px;top:35.57px;font-size:19.50px;line-height:19.50px;color:#5252e0;font-family:'Liberation Serif',serif;font-weight:bold">Formation Of The</div>
<div class="tx" style="transform:scaleX(1.0217);left:32.60px;top:64.11px;font-size:18.50px;line-height:18.50px;color:#6262dd;font-family:'Liberation Serif',serif;font-style:italic">Earth&#8217;s Magnetic Field</div>
<svg class="a" style="left:0;top:0" width="529" height="375"><path d="M142.94 157.74 L146.39 152.48 L150.53 147.63 L155.32 143.27 L160.69 139.49 L166.56 136.35 L172.86 133.93 L179.48 132.27 L186.33 131.42 L193.32 131.41 L200.32 132.25 L207.24 133.94 L213.97 136.47 L220.40 139.81 L226.44 143.92 L231.98 148.76 L236.94 154.25 L241.24 160.32 L244.81 166.89 L247.60 173.86 L249.55 181.14 L250.64 188.62 L250.84 196.18 L250.15 203.73 L248.58 211.16 L246.14 218.34 L242.89 225.19 L238.86 231.60 L234.11 237.48 L228.72 242.74 L222.77 247.32 L216.35 251.15 L209.55 254.18 L202.49 256.38 L195.26 257.71 L187.97 258.18 L180.73 257.77 L173.65 256.52 L166.84 254.44 L160.38 251.59 L154.38 248.02 L148.92 243.80 L144.06 239.00 L139.88 233.71 L136.43 228.01 L133.74 222.02 L131.85 215.83 L130.75 209.54 L130.46 203.26" fill="none" stroke="#dedef5" stroke-width="0.6"/><circle cx="248.58" cy="211.16" r="0.9" fill="#dedef5"/><path d="M142.94 157.74 L142.65 151.46 L141.55 145.17 L139.66 138.98 L136.97 132.99 L133.52 127.29 L129.34 122.00 L124.48 117.20 L119.02 112.98 L113.02 109.41 L106.56 106.56 L99.75 104.48 L92.67 103.23 L85.43 102.82 L78.14 103.29 L70.91 104.62 L63.85 106.82 L57.05 109.85 L50.63 113.68 L44.68 118.26 L39.29 123.52 L34.54 129.40 L30.51 135.81 L27.26 142.66 L24.82 149.84 L23.25 157.27 L22.56 164.82 L22.76 172.38 L23.85 179.86 L25.80 187.14 L28.59 194.11 L32.16 200.68 L36.46 206.75 L41.42 212.24 L46.96 217.08 L53.00 221.19 L59.43 224.53 L66.16 227.06 L73.08 228.75 L80.08 229.59 L87.07 229.58 L93.92 228.73 L100.54 227.07 L106.84 224.65 L112.71 221.51 L118.08 217.73 L122.87 213.37 L127.01 208.52 L130.46 203.26" fill="none" stroke="#dedef5" stroke-width="0.6"/><circle cx="24.82" cy="149.84" r="0.9" fill="#dedef5"/><path d="M142.94 157.74 L145.96 153.72 L149.52 150.04 L153.58 146.76 L158.08 143.95 L162.96 141.68 L168.16 139.97 L173.61 138.89 L179.22 138.46 L184.92 138.69 L190.62 139.61 L196.24 141.20 L201.68 143.47 L206.88 146.38 L211.74 149.91 L216.20 154.01 L220.18 158.64 L223.63 163.72 L226.48 169.20 L228.69 174.99 L230.23 181.03 L231.07 187.22 L231.19 193.49 L230.60 199.73 L229.29 205.87 L227.28 211.82 L224.61 217.50 L221.31 222.82 L217.44 227.72 L213.04 232.13 L208.18 235.99 L202.93 239.25 L197.38 241.87 L191.59 243.81 L185.67 245.07 L179.68 245.63 L173.73 245.48 L167.89 244.66 L162.24 243.17 L156.87 241.05 L151.85 238.35 L147.24 235.11 L143.11 231.40 L139.50 227.29 L136.46 222.84 L134.02 218.13 L132.20 213.24 L131.01 208.26 L130.46 203.26" fill="none" stroke="#c8c8f0" stroke-width="0.6"/><circle cx="229.29" cy="205.87" r="0.9" fill="#c8c8f0"/><path d="M142.94 157.74 L142.39 152.74 L141.20 147.76 L139.38 142.87 L136.94 138.16 L133.90 133.71 L130.29 129.60 L126.16 125.89 L121.55 122.65 L116.53 119.95 L111.16 117.83 L105.51 116.34 L99.67 115.52 L93.72 115.37 L87.73 115.93 L81.81 117.19 L76.02 119.13 L70.47 121.75 L65.22 125.01 L60.36 128.87 L55.96 133.28 L52.09 138.18 L48.79 143.50 L46.12 149.18 L44.11 155.13 L42.80 161.27 L42.21 167.51 L42.33 173.78 L43.17 179.97 L44.71 186.01 L46.92 191.80 L49.77 197.28 L53.22 202.36 L57.20 206.99 L61.66 211.09 L66.52 214.62 L71.72 217.53 L77.16 219.80 L82.78 221.39 L88.48 222.31 L94.18 222.54 L99.79 222.11 L105.24 221.03 L110.44 219.32 L115.32 217.05 L119.82 214.24 L123.88 210.96 L127.44 207.28 L130.46 203.26" fill="none" stroke="#c8c8f0" stroke-width="0.6"/><circle cx="44.11" cy="155.13" r="0.9" fill="#c8c8f0"/><path d="M142.94 157.74 L145.55 154.90 L148.56 152.32 L151.92 150.08 L155.59 148.20 L159.54 146.73 L163.70 145.72 L168.03 145.18 L172.47 145.13 L176.95 145.61 L181.41 146.60 L185.78 148.10 L190.01 150.12 L194.03 152.63 L197.79 155.60 L201.21 159.01 L204.27 162.80 L206.90 166.95 L209.06 171.39 L210.73 176.07 L211.88 180.93 L212.48 185.90 L212.53 190.92 L212.02 195.93 L210.96 200.85 L209.36 205.63 L207.25 210.19 L204.65 214.49 L201.59 218.46 L198.13 222.05 L194.31 225.23 L190.18 227.94 L185.81 230.17 L181.25 231.88 L176.56 233.06 L171.82 233.70 L167.08 233.81 L162.41 233.39 L157.88 232.46 L153.54 231.04 L149.44 229.16 L145.65 226.86 L142.20 224.19 L139.14 221.19 L136.49 217.92 L134.28 214.43 L132.54 210.79 L131.26 207.04 L130.46 203.26" fill="none" stroke="#aaaae6" stroke-width="0.6"/><circle cx="210.96" cy="200.85" r="0.9" fill="#aaaae6"/><path d="M142.94 157.74 L142.14 153.96 L140.86 150.21 L139.12 146.57 L136.91 143.08 L134.26 139.81 L131.20 136.81 L127.75 134.14 L123.96 131.84 L119.86 129.96 L115.52 128.54 L110.99 127.61 L106.32 127.19 L101.58 127.30 L96.84 127.94 L92.15 129.12 L87.59 130.83 L83.22 133.06 L79.09 135.77 L75.27 138.95 L71.81 142.54 L68.75 146.51 L66.15 150.81 L64.04 155.37 L62.44 160.15 L61.38 165.07 L60.87 170.08 L60.92 175.10 L61.52 180.07 L62.67 184.93 L64.34 189.61 L66.50 194.05 L69.13 198.20 L72.19 201.99 L75.61 205.40 L79.37 208.37 L83.39 210.88 L87.62 212.90 L91.99 214.40 L96.45 215.39 L100.93 215.87 L105.37 215.82 L109.70 215.28 L113.86 214.27 L117.81 212.80 L121.48 210.92 L124.84 208.68 L127.85 206.10 L130.46 203.26" fill="none" stroke="#aaaae6" stroke-width="0.6"/><circle cx="62.44" cy="160.15" r="0.9" fill="#aaaae6"/><path d="M142.94 157.74 L145.19 155.95 L147.70 154.37 L150.43 153.04 L153.37 152.00 L156.48 151.26 L159.71 150.86 L163.04 150.80 L166.42 151.11 L169.81 151.79 L173.16 152.85 L176.43 154.28 L179.57 156.07 L182.54 158.22 L185.30 160.69 L187.80 163.47 L190.02 166.53 L191.93 169.84 L193.48 173.35 L194.66 177.03 L195.46 180.83 L195.85 184.71 L195.83 188.63 L195.40 192.52 L194.57 196.36 L193.33 200.08 L191.71 203.65 L189.74 207.03 L187.42 210.17 L184.80 213.03 L181.90 215.60 L178.78 217.82 L175.46 219.70 L171.99 221.20 L168.41 222.31 L164.78 223.04 L161.13 223.37 L157.51 223.31 L153.97 222.87 L150.55 222.08 L147.29 220.94 L144.22 219.48 L141.39 217.74 L138.81 215.74 L136.51 213.52 L134.52 211.12 L132.84 208.59 L131.49 205.95 L130.46 203.26" fill="none" stroke="#9090de" stroke-width="0.6"/><circle cx="194.57" cy="196.36" r="0.9" fill="#9090de"/><path d="M142.94 157.74 L141.91 155.05 L140.56 152.41 L138.88 149.88 L136.89 147.48 L134.59 145.26 L132.01 143.26 L129.18 141.52 L126.11 140.06 L122.85 138.92 L119.43 138.13 L115.89 137.69 L112.27 137.63 L108.62 137.96 L104.99 138.69 L101.41 139.80 L97.94 141.30 L94.62 143.18 L91.50 145.40 L88.60 147.97 L85.98 150.83 L83.66 153.97 L81.69 157.35 L80.07 160.92 L78.83 164.64 L78.00 168.48 L77.57 172.37 L77.55 176.29 L77.94 180.17 L78.74 183.97 L79.92 187.65 L81.47 191.16 L83.38 194.47 L85.60 197.53 L88.10 200.31 L90.86 202.78 L93.83 204.93 L96.97 206.72 L100.24 208.15 L103.59 209.21 L106.98 209.89 L110.36 210.20 L113.69 210.14 L116.92 209.74 L120.03 209.00 L122.97 207.96 L125.70 206.63 L128.21 205.05 L130.46 203.26" fill="none" stroke="#9090de" stroke-width="0.6"/><circle cx="78.83" cy="164.64" r="0.9" fill="#9090de"/><path d="M142.94 157.74 L144.87 156.87 L146.94 156.17 L149.13 155.66 L151.41 155.35 L153.78 155.25 L156.19 155.39 L158.64 155.76 L161.09 156.38 L163.51 157.25 L165.88 158.37 L168.17 159.73 L170.35 161.32 L172.40 163.15 L174.28 165.18 L175.97 167.42 L177.46 169.83 L178.72 172.39 L179.73 175.08 L180.49 177.88 L180.97 180.75 L181.18 183.67 L181.10 186.60 L180.74 189.52 L180.10 192.39 L179.19 195.19 L178.01 197.88 L176.58 200.45 L174.91 202.85 L173.03 205.08 L170.96 207.10 L168.71 208.90 L166.32 210.46 L163.82 211.78 L161.22 212.83 L158.56 213.62 L155.88 214.15 L153.19 214.41 L150.52 214.42 L147.92 214.17 L145.39 213.68 L142.97 212.97 L140.67 212.04 L138.52 210.92 L136.53 209.64 L134.73 208.20 L133.11 206.65 L131.68 204.99 L130.46 203.26" fill="none" stroke="#7c7cd8" stroke-width="0.6"/><circle cx="180.10" cy="192.39" r="0.9" fill="#7c7cd8"/><path d="M142.94 157.74 L141.72 156.01 L140.29 154.35 L138.67 152.80 L136.87 151.36 L134.88 150.08 L132.73 148.96 L130.43 148.03 L128.01 147.32 L125.48 146.83 L122.88 146.58 L120.21 146.59 L117.52 146.85 L114.84 147.38 L112.18 148.17 L109.58 149.22 L107.08 150.54 L104.69 152.10 L102.44 153.90 L100.37 155.92 L98.49 158.15 L96.82 160.55 L95.39 163.12 L94.21 165.81 L93.30 168.61 L92.66 171.48 L92.30 174.40 L92.22 177.33 L92.43 180.25 L92.91 183.12 L93.67 185.92 L94.68 188.61 L95.94 191.17 L97.43 193.58 L99.12 195.82 L101.00 197.85 L103.05 199.68 L105.23 201.27 L107.52 202.63 L109.89 203.75 L112.31 204.62 L114.76 205.24 L117.21 205.61 L119.62 205.75 L121.99 205.65 L124.27 205.34 L126.46 204.83 L128.53 204.13 L130.46 203.26" fill="none" stroke="#7c7cd8" stroke-width="0.6"/><circle cx="93.30" cy="168.61" r="0.9" fill="#7c7cd8"/><path d="M142.94 157.74 L144.61 157.61 L146.33 157.62 L148.08 157.75 L149.84 158.03 L151.62 158.45 L153.38 159.02 L155.12 159.73 L156.82 160.60 L158.48 161.62 L160.06 162.78 L161.57 164.09 L162.98 165.53 L164.28 167.09 L165.46 168.78 L166.51 170.57 L167.41 172.46 L168.15 174.43 L168.73 176.47 L169.14 178.56 L169.38 180.69 L169.44 182.83 L169.31 184.98 L169.01 187.12 L168.53 189.22 L167.87 191.28 L167.04 193.27 L166.05 195.18 L164.91 197.00 L163.62 198.71 L162.20 200.30 L160.66 201.76 L159.02 203.07 L157.28 204.24 L155.47 205.25 L153.59 206.10 L151.67 206.78 L149.73 207.30 L147.77 207.65 L145.81 207.84 L143.87 207.88 L141.96 207.75 L140.10 207.48 L138.29 207.07 L136.55 206.53 L134.89 205.87 L133.32 205.10 L131.84 204.22 L130.46 203.26" fill="none" stroke="#7070d2" stroke-width="0.6"/><circle cx="168.53" cy="189.22" r="0.9" fill="#7070d2"/><path d="M142.94 157.74 L141.56 156.78 L140.08 155.90 L138.51 155.13 L136.85 154.47 L135.11 153.93 L133.30 153.52 L131.44 153.25 L129.53 153.12 L127.59 153.16 L125.63 153.35 L123.67 153.70 L121.73 154.22 L119.81 154.90 L117.93 155.75 L116.12 156.76 L114.38 157.93 L112.74 159.24 L111.20 160.70 L109.78 162.29 L108.49 164.00 L107.35 165.82 L106.36 167.73 L105.53 169.72 L104.87 171.78 L104.39 173.88 L104.09 176.02 L103.96 178.17 L104.02 180.31 L104.26 182.44 L104.67 184.53 L105.25 186.57 L105.99 188.54 L106.89 190.43 L107.94 192.22 L109.12 193.91 L110.42 195.47 L111.83 196.91 L113.34 198.22 L114.92 199.38 L116.58 200.40 L118.28 201.27 L120.02 201.98 L121.78 202.55 L123.56 202.97 L125.32 203.25 L127.07 203.38 L128.79 203.39 L130.46 203.26" fill="none" stroke="#7070d2" stroke-width="0.6"/><circle cx="104.87" cy="171.78" r="0.9" fill="#7070d2"/><path d="M163.0 117.5 L109.7 242.0" stroke="#6a6ad6" stroke-width="0.9"/><path d="M150.8 116.0 L122.0 244.0" stroke="#6a6ad6" stroke-width="0.8" stroke-dasharray="2 2"/><circle cx="136.70" cy="180.50" r="23.6" fill="#f1f1fc" stroke="#6a6ad4" stroke-width="0.7"/><path d="M139.6 166.0 L139.0 181.5 L133.8 181.5 Z" fill="#b4b4f2"/><path d="M133.2 197.0 L139.0 181.5 L133.8 181.5 Z" fill="#5656e0"/><path d="M158.0 123.4 A5.5 3.3 0 1 0 165.0 127.0" fill="none" stroke="#6a6ad6" stroke-width="0.6"/><path d="M146.5 135.0 A5 3 0 0 0 155.0 137.5" fill="none" stroke="#6a6ad6" stroke-width="0.6"/><path d="M117.6 235.0 A5.6 3.4 0 1 0 113.0 239.2" fill="none" stroke="#6a6ad6" stroke-width="0.6"/><path d="M115.5 233.5 L117.6 235.0 L117.0 237.3" fill="none" stroke="#6a6ad6" stroke-width="0.6"/></svg>
<div class="tx" style="transform:scaleX(0.9540);left:117.00px;top:103.48px;font-size:5.40px;line-height:5.40px;color:#9a9ae2;font-family:'Liberation Serif',serif">North</div>
<div class="tx" style="transform:scaleX(0.8947);left:117.00px;top:109.38px;font-size:5.40px;line-height:5.40px;color:#9a9ae2;font-family:'Liberation Serif',serif">Magnetic Pole</div>
<div class="tx" style="transform:scaleX(0.9792);left:173.00px;top:117.61px;font-size:4.60px;line-height:4.60px;color:#6060d6;font-family:'Liberation Sans',sans-serif;font-weight:bold">Geographic</div>
<div class="tx" style="transform:scaleX(0.9038);left:173.00px;top:123.61px;font-size:4.60px;line-height:4.60px;color:#6060d6;font-family:'Liberation Sans',sans-serif;font-weight:bold">North Pole</div>
<div class="tx" style="transform:scaleX(0.9792);left:77.00px;top:234.61px;font-size:4.60px;line-height:4.60px;color:#6060d6;font-family:'Liberation Sans',sans-serif;font-weight:bold">Geographic</div>
<div class="tx" style="transform:scaleX(0.8750);left:77.00px;top:240.61px;font-size:4.60px;line-height:4.60px;color:#6060d6;font-family:'Liberation Sans',sans-serif;font-weight:bold">South Pole</div>
<div class="tx" style="transform:scaleX(0.9220);left:128.80px;top:237.61px;font-size:4.60px;line-height:4.60px;color:#6060d6;font-family:'Liberation Sans',sans-serif;font-weight:bold">South</div>
<div class="tx" style="transform:scaleX(1.0039);left:128.80px;top:243.61px;font-size:4.60px;line-height:4.60px;color:#6060d6;font-family:'Liberation Sans',sans-serif;font-weight:bold">Magnetic</div>
<div class="tx" style="transform:scaleX(0.9275);left:128.80px;top:249.61px;font-size:4.60px;line-height:4.60px;color:#6060d6;font-family:'Liberation Sans',sans-serif;font-weight:bold">Pole</div>
<div class="tx" style="transform:scaleX(0.7649);left:149.00px;top:129.94px;font-size:4.20px;line-height:4.20px;color:#6060d6;font-family:'Liberation Sans',sans-serif">11.5</div>
<div class="a" style="left:269.0px;top:32.7px;width:73.0px;height:13.3px;border-radius:1.5px;background:linear-gradient(90deg,#8282ee,#d2d2fa)"></div>
<div class="tx" style="transform:scaleX(1.0650);left:273.20px;top:35.65px;font-size:7.60px;line-height:7.60px;color:#fff;font-family:'Liberation Sans',sans-serif;font-weight:bold">Earth's Magnetic</div>
<div class="tx" style="transform:scaleX(0.9057);left:269.00px;top:53.71px;font-size:6.60px;line-height:6.60px;color:#5c5cda;font-family:'Liberation Sans',sans-serif">The Earth's Magnetic Field Is Like A Huge And Invisible Protective Shield,</div>
<div class="tx" style="transform:scaleX(0.9095);left:269.00px;top:66.61px;font-size:6.60px;line-height:6.60px;color:#5c5cda;font-family:'Liberation Sans',sans-serif">Playing A Vital Role In The Cosmic Environment. It Effectively Resists Most</div>
<div class="tx" style="transform:scaleX(0.9101);left:269.00px;top:79.11px;font-size:6.60px;line-height:6.60px;color:#5c5cda;font-family:'Liberation Sans',sans-serif">Of The Various Types Of Rays In The Universe, Such As High-Energy</div>
<div class="tx" style="transform:scaleX(0.9000);left:269.00px;top:92.01px;font-size:6.60px;line-height:6.60px;color:#5c5cda;font-family:'Liberation Sans',sans-serif">Charged Particle Flows.</div>
<svg class="a" style="left:0;top:0" width="529" height="375"><circle cx="274.0" cy="131.5" r="5.7" fill="#f2f2fc" stroke="#cfcfee" stroke-width="0.6"/><path d="M274.0 151 V161.5" stroke="#cfcfee" stroke-width="0.8"/><circle cx="299.8" cy="131.5" r="7.7" fill="#e2e2fa" stroke="#a8a8e2" stroke-width="0.6"/><path d="M299.8 151 V161.5" stroke="#a8a8e2" stroke-width="0.8"/><circle cx="329.5" cy="131.5" r="10.0" fill="#c8c8f8" stroke="#8282d8" stroke-width="0.6"/><path d="M329.5 151 V161.5" stroke="#8282d8" stroke-width="0.8"/><circle cx="365.5" cy="131.5" r="12.4" fill="#b8b8f8" stroke="#6a6ad2" stroke-width="0.6"/><path d="M365.5 151 V161.5" stroke="#6a6ad2" stroke-width="0.8"/><circle cx="401.4" cy="131.5" r="10.0" fill="#c6c6f8" stroke="#7a7ad6" stroke-width="0.6"/><path d="M401.4 151 V161.5" stroke="#7a7ad6" stroke-width="0.8"/><circle cx="432.9" cy="131.5" r="7.7" fill="#dedef6" stroke="#a4a4d8" stroke-width="0.6"/><path d="M432.9 151 V161.5" stroke="#a4a4d8" stroke-width="0.8"/><circle cx="466.0" cy="131.5" r="5.7" fill="#f2f2fa" stroke="#d0d0ec" stroke-width="0.6"/><path d="M466.0 151 V161.5" stroke="#d0d0ec" stroke-width="0.8"/><g transform="rotate(30 365.5 131.5)"><ellipse cx="365.5" cy="131.5" rx="18" ry="4.4" fill="none" stroke="#5a5ad0" stroke-width="0.7"/><circle cx="365.5" cy="131.5" r="12.4" transform="rotate(-30 365.5 131.5)" fill="#b8b8f8" stroke="#6a6ad2" stroke-width="0.6"/><path d="M347.5 131.5 A18 4.4 0 0 0 383.5 131.5" fill="none" stroke="#5a5ad0" stroke-width="0.7"/></g></svg>
<div class="tx" style="transform:scaleX(0.9662);left:267.75px;top:164.88px;font-size:4.40px;line-height:4.40px;color:#c4c4ea;font-family:'Liberation Sans',sans-serif;font-weight:bold">Venus</div>
<div class="tx" style="transform:scaleX(0.9756);left:294.80px;top:164.88px;font-size:4.40px;line-height:4.40px;color:#9a9ae0;font-family:'Liberation Sans',sans-serif;font-weight:bold">Mars</div>
<div class="tx" style="transform:scaleX(1.1953);left:320.75px;top:164.88px;font-size:4.40px;line-height:4.40px;color:#7070d4;font-family:'Liberation Sans',sans-serif;font-weight:bold">Jupiter</div>
<div class="tx" style="transform:scaleX(1.0787);left:358.00px;top:164.88px;font-size:4.40px;line-height:4.40px;color:#4848c0;font-family:'Liberation Sans',sans-serif;font-weight:bold">Saturn</div>
<div class="tx" style="transform:scaleX(0.9907);left:393.90px;top:164.88px;font-size:4.40px;line-height:4.40px;color:#6a6ad0;font-family:'Liberation Sans',sans-serif;font-weight:bold">Uranus</div>
<div class="tx" style="transform:scaleX(0.9956);left:424.15px;top:164.88px;font-size:4.40px;line-height:4.40px;color:#9a9ad8;font-family:'Liberation Sans',sans-serif;font-weight:bold">Neptune</div>
<div class="tx" style="transform:scaleX(1.0238);left:457.25px;top:164.88px;font-size:4.40px;line-height:4.40px;color:#c8c8e8;font-family:'Liberation Sans',sans-serif;font-weight:bold">Mercury</div>
<div class="a" style="left:269.0px;top:194.4px;width:89.0px;height:13.0px;border-radius:1.5px;background:linear-gradient(90deg,#8282ee,#d2d2fa)"></div>
<div class="tx" style="transform:scaleX(0.9159);left:273.20px;top:197.20px;font-size:7.60px;line-height:7.60px;color:#fff;font-family:'Liberation Sans',sans-serif;font-weight:bold">Loses Its Magnetic Field</div>
<div class="tx" style="transform:scaleX(0.9079);left:269.00px;top:215.41px;font-size:6.60px;line-height:6.60px;color:#5c5cda;font-family:'Liberation Sans',sans-serif">If These Rays Reach The Earth Without Obstruction, They Will Cause A</div>
<div class="tx" style="transform:scaleX(0.9121);left:269.00px;top:228.31px;font-size:6.60px;line-height:6.60px;color:#5c5cda;font-family:'Liberation Sans',sans-serif">Devastating Blow To Life On Earth. Once The Earth Loses Its Magnetic</div>
<div class="tx" style="transform:scaleX(0.9083);left:269.00px;top:241.21px;font-size:6.60px;line-height:6.60px;color:#5c5cda;font-family:'Liberation Sans',sans-serif">Field, The Creatures On The Earth's Surface, Whether Complex Plants And</div>
<div class="tx" style="transform:scaleX(0.9127);left:269.00px;top:253.71px;font-size:6.60px;line-height:6.60px;color:#5c5cda;font-family:'Liberation Sans',sans-serif">Animals Or Tiny Microorganisms, Will Find It Difficult To Survive Under The</div>
<div class="tx" style="transform:scaleX(0.9121);left:269.00px;top:266.41px;font-size:6.60px;line-height:6.60px;color:#5c5cda;font-family:'Liberation Sans',sans-serif">Radiation Of Strong Rays And Will Quickly Go To Extinction.</div>
<div class="a" style="left:35.0px;top:282.3px;width:47.0px;height:13.3px;border-radius:1.5px;background:linear-gradient(90deg,#8282ee,#d2d2fa)"></div>
<div class="tx" style="transform:scaleX(0.9699);left:39.20px;top:285.25px;font-size:7.60px;line-height:7.60px;color:#fff;font-family:'Liberation Sans',sans-serif;font-weight:bold">Solar Wind</div>
<div class="tx" style="transform:scaleX(0.9104);left:35.50px;top:307.01px;font-size:6.60px;line-height:6.60px;color:#5c5cda;font-family:'Liberation Sans',sans-serif">At The Same Time, The Atmosphere Will Also Lose The Protection Of The Magnetic Field And Be Gradually</div>
<div class="tx" style="transform:scaleX(0.9092);left:35.50px;top:319.81px;font-size:6.60px;line-height:6.60px;color:#5c5cda;font-family:'Liberation Sans',sans-serif">Stripped Away By Forces Such As The Solar Wind, And Eventually Disappear. It Can Be Said That The</div>
<div class="tx" style="transform:scaleX(0.9092);left:35.50px;top:332.41px;font-size:6.60px;line-height:6.60px;color:#5c5cda;font-family:'Liberation Sans',sans-serif">Earth's Magnetic Field Provides An Indispensable Guarantee For The Reproduction Of Life On Earth And</div>
<div class="tx" style="transform:scaleX(0.9071);left:35.50px;top:345.21px;font-size:6.60px;line-height:6.60px;color:#5c5cda;font-family:'Liberation Sans',sans-serif">The Stable Existence Of The Atmosphere By Shielding Dangerous Substances Such As Solar Particles.</div>
</div></div>
<div class="a" style="left:74px;top:102px;width:163px;height:115px;border:2px solid #7676ee;border-radius:4px"></div>
<div class="a" style="left:74px;top:269px;width:163px;height:115px;background:#fff;border-radius:5px;overflow:hidden"><div class="a" style="left:0;top:0;width:529px;height:375px;transform:scale(0.30813);transform-origin:0 0"><div class="a" style="left:21.3px;top:21.4px;width:51.7px;height:13.3px;border-radius:1.5px;background:linear-gradient(90deg,#8282ee,#d2d2fa)"></div>
<div class="tx" style="transform:scaleX(0.9730);left:25.50px;top:24.35px;font-size:7.60px;line-height:7.60px;color:#fff;font-family:'Liberation Sans',sans-serif;font-weight:bold">Introduction</div>
<div class="tx" style="transform:scaleX(0.9070);left:21.70px;top:47.51px;font-size:6.60px;line-height:6.60px;color:#5c5cda;font-family:'Liberation Sans',sans-serif">The Earth's Magnetic Field, A Crucial Feature Of Our Planet, Has Long</div>
<div class="tx" style="transform:scaleX(0.9111);left:21.70px;top:60.11px;font-size:6.60px;line-height:6.60px;color:#5c5cda;font-family:'Liberation Sans',sans-serif">Intrigued Scientists. It Acts As A Shield Against Harmful Cosmic Radiation</div>
<div class="tx" style="transform:scaleX(0.9082);left:21.70px;top:73.01px;font-size:6.60px;line-height:6.60px;color:#5c5cda;font-family:'Liberation Sans',sans-serif">And Solar Particles, Playing A Vital Role In Protecting Life On Earth And</div>
<div class="tx" style="transform:scaleX(0.9063);left:21.70px;top:85.71px;font-size:6.60px;line-height:6.60px;color:#5c5cda;font-family:'Liberation Sans',sans-serif">Maintaining The Stability Of The Atmosphere. Understanding Its Formation</div>
<div class="tx" style="transform:scaleX(0.9145);left:21.70px;top:98.71px;font-size:6.60px;line-height:6.60px;color:#5c5cda;font-family:'Liberation Sans',sans-serif">Is Fundamental To Various Scientific Disciplines, From Geophysics To</div>
<div class="tx" style="transform:scaleX(0.8847);left:21.70px;top:111.21px;font-size:6.60px;line-height:6.60px;color:#5c5cda;font-family:'Liberation Sans',sans-serif">Astrobiology.</div>
<div class="a" style="left:240px;top:22px;width:1px;height:234px;background:#9a9ae6"></div>
<div class="a" style="left:254.2px;top:20.2px;width:65.4px;height:13.0px;border-radius:1.5px;background:linear-gradient(90deg,#8282ee,#d2d2fa)"></div>
<div class="tx" style="transform:scaleX(0.9897);left:258.40px;top:23.00px;font-size:7.60px;line-height:7.60px;color:#fff;font-family:'Liberation Sans',sans-serif;font-weight:bold">Dynamo Theory</div>
<div class="tx" style="transform:scaleX(0.9074);left:254.80px;top:46.11px;font-size:6.60px;line-height:6.60px;color:#5c5cda;font-family:'Liberation Sans',sans-serif">The Most Widely - Accepted Theory For The Formation Of The Earth's Magnetic Field Is</div>
<div class="tx" style="transform:scaleX(0.9114);left:254.80px;top:58.91px;font-size:6.60px;line-height:6.60px;color:#5c5cda;font-family:'Liberation Sans',sans-serif">The Dynamo Theory. At The Core Of This Theory Is The Motion Of Molten Iron And Nickel</div>
<div class="tx" style="transform:scaleX(0.9108);left:254.80px;top:71.61px;font-size:6.60px;line-height:6.60px;color:#5c5cda;font-family:'Liberation Sans',sans-serif">In The Earth's Outer Core. The Outer Core Is A Fluid Layer, Heated By The Decay Of</div>
<div class="tx" style="transform:scaleX(0.9083);left:254.80px;top:84.21px;font-size:6.60px;line-height:6.60px;color:#5c5cda;font-family:'Liberation Sans',sans-serif">Radioactive Elements And Residual Heat From The Planet's Formation. This Heat Creates</div>
<div class="tx" style="transform:scaleX(0.8994);left:254.80px;top:97.11px;font-size:6.60px;line-height:6.60px;color:#5c5cda;font-family:'Liberation Sans',sans-serif">Convection Currents Within The Fluid.</div>
<div class="tx" style="transform:scaleX(0.9078);left:254.80px;top:109.71px;font-size:6.60px;line-height:6.60px;color:#5c5cda;font-family:'Liberation Sans',sans-serif">As The Earth Rotates, The Coriolis Force Acts On These Convective Flows, Organizing</div>
<div class="tx" style="transform:scaleX(0.9126);left:254.80px;top:122.81px;font-size:6.60px;line-height:6.60px;color:#5c5cda;font-family:'Liberation Sans',sans-serif">Them Into Patterns That Generate Electric Currents. According To Ampere's Law, Electric</div>
<div class="tx" style="transform:scaleX(0.9055);left:254.80px;top:135.41px;font-size:6.60px;line-height:6.60px;color:#5c5cda;font-family:'Liberation Sans',sans-serif">Currents Produce Magnetic Fields. Thus, The Combination Of Convection And Rotation In</div>
<div class="tx" style="transform:scaleX(0.9085);left:254.80px;top:148.21px;font-size:6.60px;line-height:6.60px;color:#5c5cda;font-family:'Liberation Sans',sans-serif">The Outer Core Creates A Self - Sustaining Dynamo Process That Generates The Earth's</div>
<div class="tx" style="transform:scaleX(0.8878);left:254.80px;top:160.91px;font-size:6.60px;line-height:6.60px;color:#5c5cda;font-family:'Liberation Sans',sans-serif">Magnetic Field.</div>
<div class="a" style="left:254.3px;top:192.2px;width:89.5px;height:12.8px;border-radius:1.5px;background:linear-gradient(90deg,#8282ee,#d2d2fa)"></div>
<div class="tx" style="transform:scaleX(0.9782);left:258.50px;top:194.90px;font-size:7.60px;line-height:7.60px;color:#fff;font-family:'Liberation Sans',sans-serif;font-weight:bold">Role Of The Inner Core</div>
<div class="tx" style="transform:scaleX(0.9094);left:254.80px;top:216.81px;font-size:6.60px;line-height:6.60px;color:#5c5cda;font-family:'Liberation Sans',sans-serif">The Solid Inner Core Also Plays A Role In The Magnetic Field's Formation. Although It Is</div>
<div class="tx" style="transform:scaleX(0.9067);left:254.80px;top:230.01px;font-size:6.60px;line-height:6.60px;color:#5c5cda;font-family:'Liberation Sans',sans-serif">Solid, It Interacts With The Fluid Outer Core. The Growth And Crystallization Processes</div>
<div class="tx" style="transform:scaleX(0.8800);left:254.80px;top:242.81px;font-size:6.60px;line-height:6.60px;color:#5c5cda;font-family:'Liberation Sans',sans-serif">Of The Inner Core Release Heat And Light Elements, Which Further Drive The Convection</div>
<div class="tx" style="transform:scaleX(0.8763);left:254.80px;top:255.61px;font-size:6.60px;line-height:6.60px;color:#5c5cda;font-family:'Liberation Sans',sans-serif">In The Outer Core And Contribute To The Maintenance Of The Magnetic Field.</div>
<svg class="a" style="left:0;top:0" width="529" height="375"><path d="M63.5 144.0 A43 48 0 0 0 63.5 240.0 Z" fill="#c2c2f6" stroke="#4e4ed0" stroke-width="0.9"/><ellipse cx="63.5" cy="192.0" rx="10.5" ry="48" fill="#ececfc" stroke="#4e4ed0" stroke-width="0.9"/><ellipse cx="64.5" cy="192.0" rx="7.5" ry="42" fill="#5050e0"/><ellipse cx="65" cy="192.0" rx="8" ry="36" fill="#c8c8f6" stroke="#4e4ed0" stroke-width="0.6"/><path d="M65 156.0 H78 V228.0 H65 Z" fill="#c8c8f6"/><path d="M65 156.0 H78 M65 228.0 H78" stroke="#4e4ed0" stroke-width="0.6"/><ellipse cx="78" cy="192.0" rx="8" ry="36" fill="#ececfc" stroke="#4e4ed0" stroke-width="0.9"/><ellipse cx="79" cy="192.0" rx="5.5" ry="31" fill="#5050e0"/><ellipse cx="79" cy="192.0" rx="6" ry="28" fill="#c8c8f6" stroke="#4e4ed0" stroke-width="0.6"/><path d="M79 164.0 H91 V220.0 H79 Z" fill="#c8c8f6"/><path d="M79 164.0 H91 M79 220.0 H91" stroke="#4e4ed0" stroke-width="0.6"/><ellipse cx="91" cy="192.0" rx="6" ry="28" fill="#ececfc" stroke="#4e4ed0" stroke-width="0.9"/><ellipse cx="92" cy="192.0" rx="4" ry="22" fill="#5050e0"/><ellipse cx="92.5" cy="192.0" rx="3.5" ry="15" fill="#c8c8f6"/><defs><radialGradient id="ic3" cx="0.4" cy="0.35" r="0.7"><stop offset="0" stop-color="#b0b0fa"/><stop offset="1" stop-color="#5a5ae6"/></radialGradient></defs><circle cx="100.4" cy="193.0" r="10.5" fill="url(#ic3)"/><path d="M62.0 148.0 L70.0 136.0" stroke="#5a5ad6" stroke-width="0.6"/><path d="M78.0 159.0 L92.0 146.0" stroke="#5a5ad6" stroke-width="0.6"/><path d="M91.0 171.0 L106.0 160.0" stroke="#5a5ad6" stroke-width="0.6"/><path d="M100.0 185.0 L120.0 176.0" stroke="#5a5ad6" stroke-width="0.6"/><path d="M115.0 196.0 L124.0 196.0" stroke="#b0b0e6" stroke-width="0.6" stroke-dasharray="1.5 1"/><path d="M92.0 205.0 L123.0 213.0" stroke="#b0b0e6" stroke-width="0.6" stroke-dasharray="1.5 1"/><path d="M78.0 220.0 L123.0 229.0" stroke="#b0b0e6" stroke-width="0.6" stroke-dasharray="1.5 1"/><path d="M62.0 230.0 L123.0 246.0" stroke="#b0b0e6" stroke-width="0.6" stroke-dasharray="1.5 1"/></svg>
<div class="tx" style="transform:scaleX(1.0833);left:72.40px;top:132.11px;font-size:4.60px;line-height:4.60px;color:#5a5ad6;font-family:'Liberation Sans',sans-serif;font-weight:bold">Crust</div>
<div class="tx" style="transform:scaleX(1.0300);left:94.40px;top:142.41px;font-size:4.60px;line-height:4.60px;color:#5a5ad6;font-family:'Liberation Sans',sans-serif;font-weight:bold">Mantle</div>
<div class="tx" style="transform:scaleX(1.0000);left:109.00px;top:156.31px;font-size:4.60px;line-height:4.60px;color:#5a5ad6;font-family:'Liberation Sans',sans-serif;font-weight:bold">Outer Core</div>
<div class="tx" style="transform:scaleX(1.0007);left:122.70px;top:171.81px;font-size:4.60px;line-height:4.60px;color:#5a5ad6;font-family:'Liberation Sans',sans-serif;font-weight:bold">Inner Core</div>
<div class="tx" style="transform:scaleX(1.0433);left:126.20px;top:193.81px;font-size:4.60px;line-height:4.60px;color:#7a7ad8;font-family:'Liberation Sans',sans-serif">600 Miles (1,200 Kilometers)</div>
<div class="tx" style="transform:scaleX(1.0431);left:126.20px;top:210.61px;font-size:4.60px;line-height:4.60px;color:#7a7ad8;font-family:'Liberation Sans',sans-serif">1,400 Miles (2,250 Kilometers)</div>
<div class="tx" style="transform:scaleX(1.0431);left:126.20px;top:226.81px;font-size:4.60px;line-height:4.60px;color:#7a7ad8;font-family:'Liberation Sans',sans-serif">1,800 Miles (2,900 Kilometers)</div>
<div class="tx" style="transform:scaleX(1.0431);left:126.20px;top:243.81px;font-size:4.60px;line-height:4.60px;color:#7a7ad8;font-family:'Liberation Sans',sans-serif">5,100 Miles (8,200 Kilometers)</div>
<div class="a" style="left:21.0px;top:272.6px;width:92.0px;height:13.0px;border-radius:1.5px;background:linear-gradient(90deg,#8282ee,#d2d2fa)"></div>
<div class="tx" style="transform:scaleX(0.7134);left:25.20px;top:275.40px;font-size:7.60px;line-height:7.60px;color:#fff;font-family:'Liberation Sans',sans-serif;font-weight:bold">Magnetic Reversal Phenomenon</div>
<div class="tx" style="transform:scaleX(0.9191);left:21.70px;top:297.21px;font-size:6.60px;line-height:6.60px;color:#5c5cda;font-family:'Liberation Sans',sans-serif">Over Geological Time, The Earth's Magnetic Field Has Undergone Reversals, During Which The Magnetic North And South Poles Switch Places. The Study Of These</div>
<div class="tx" style="transform:scaleX(0.8987);left:21.70px;top:309.81px;font-size:6.60px;line-height:6.60px;color:#5c5cda;font-family:'Liberation Sans',sans-serif">Reversals Is Recorded In The Magnetic Minerals Of Rocks On The Ocean Floor, Providing Important Evidence For Plate Tectonics And The Dynamo Theory, And Helping</div>
<div class="tx" style="transform:scaleX(0.8945);left:21.70px;top:322.61px;font-size:6.60px;line-height:6.60px;color:#5c5cda;font-family:'Liberation Sans',sans-serif">Scientists Understand The Dynamics Of The Earth's Interior Over Time. Such Reversals Remain An Active Area Of Research In Geophysics And Earth Science Today And</div>
<div class="tx" style="transform:scaleX(1.7095);left:21.70px;top:335.21px;font-size:6.60px;line-height:6.60px;color:#5c5cda;font-family:'Liberation Sans',sans-serif">Into The Future.</div>
</div></div>
<div class="a" style="left:74px;top:436px;width:163px;height:115px;background:#fff;border-radius:5px"></div>
<div class="a" style="left:80px;top:442px;font-family:'Liberation Serif',serif;font-size:6.6px;line-height:7px;white-space:nowrap;color:#5252e0"><i style="color:#8080e0">Evidence</i> <b>For The Theories</b></div>
<svg style="left:74px;top:436px" width="163" height="115"><circle cx="19" cy="28.7" r="7.8" fill="#c4c4f6" stroke="#8a8ade" stroke-width="0.5"/><circle cx="50" cy="28.7" r="3" fill="#c4c4f6" stroke="#8a8ade" stroke-width="0.5"/><path d="M6 28.7 H50 M19 21 L50 26 M19 36.5 L50 31.4 M19 19 V38" stroke="#a0a0e0" stroke-width="0.4" fill="none"/></svg>
<div class="a" style="left:82.0px;top:481.6px;width:30.0px;height:4.0px;background:linear-gradient(90deg,#9a9af0,#dcdcfa)"></div>
<div class="a" style="left:82.0px;top:490.5px;width:43.0px;height:1px;background:repeating-linear-gradient(90deg,#bcbcee 0 2.5px,#e4e4f8 2.5px 3.2px,#c8c8f0 3.2px 5px,#f0f0fc 5px 5.6px)"></div>
<div class="a" style="left:82.0px;top:494.3px;width:43.0px;height:1px;background:repeating-linear-gradient(90deg,#bcbcee 0 2.5px,#e4e4f8 2.5px 3.2px,#c8c8f0 3.2px 5px,#f0f0fc 5px 5.6px)"></div>
<div class="a" style="left:82.0px;top:498.2px;width:43.0px;height:1px;background:repeating-linear-gradient(90deg,#bcbcee 0 2.5px,#e4e4f8 2.5px 3.2px,#c8c8f0 3.2px 5px,#f0f0fc 5px 5.6px)"></div>
<div class="a" style="left:82.0px;top:502.0px;width:43.0px;height:1px;background:repeating-linear-gradient(90deg,#bcbcee 0 2.5px,#e4e4f8 2.5px 3.2px,#c8c8f0 3.2px 5px,#f0f0fc 5px 5.6px)"></div>
<div class="a" style="left:82.0px;top:505.9px;width:43.0px;height:1px;background:repeating-linear-gradient(90deg,#bcbcee 0 2.5px,#e4e4f8 2.5px 3.2px,#c8c8f0 3.2px 5px,#f0f0fc 5px 5.6px)"></div>
<div class="a" style="left:82.0px;top:509.7px;width:26.0px;height:1px;background:repeating-linear-gradient(90deg,#bcbcee 0 2.5px,#e4e4f8 2.5px 3.2px,#c8c8f0 3.2px 5px,#f0f0fc 5px 5.6px)"></div>
<div class="a" style="left:82.0px;top:518.6px;width:43.0px;height:1px;background:repeating-linear-gradient(90deg,#bcbcee 0 2.5px,#e4e4f8 2.5px 3.2px,#c8c8f0 3.2px 5px,#f0f0fc 5px 5.6px)"></div>
<div class="a" style="left:82.0px;top:522.5px;width:43.0px;height:1px;background:repeating-linear-gradient(90deg,#bcbcee 0 2.5px,#e4e4f8 2.5px 3.2px,#c8c8f0 3.2px 5px,#f0f0fc 5px 5.6px)"></div>
<div class="a" style="left:82.0px;top:526.4px;width:43.0px;height:1px;background:repeating-linear-gradient(90deg,#bcbcee 0 2.5px,#e4e4f8 2.5px 3.2px,#c8c8f0 3.2px 5px,#f0f0fc 5px 5.6px)"></div>
<div class="a" style="left:82.0px;top:530.3px;width:43.0px;height:1px;background:repeating-linear-gradient(90deg,#bcbcee 0 2.5px,#e4e4f8 2.5px 3.2px,#c8c8f0 3.2px 5px,#f0f0fc 5px 5.6px)"></div>
<div class="a" style="left:82.0px;top:534.2px;width:43.0px;height:1px;background:repeating-linear-gradient(90deg,#bcbcee 0 2.5px,#e4e4f8 2.5px 3.2px,#c8c8f0 3.2px 5px,#f0f0fc 5px 5.6px)"></div>
<div class="a" style="left:82.0px;top:538.1px;width:43.0px;height:1px;background:repeating-linear-gradient(90deg,#bcbcee 0 2.5px,#e4e4f8 2.5px 3.2px,#c8c8f0 3.2px 5px,#f0f0fc 5px 5.6px)"></div>
<div class="a" style="left:82.0px;top:542.0px;width:30.0px;height:1px;background:repeating-linear-gradient(90deg,#bcbcee 0 2.5px,#e4e4f8 2.5px 3.2px,#c8c8f0 3.2px 5px,#f0f0fc 5px 5.6px)"></div>
<div class="a" style="left:129.4px;top:456.4px;width:0.6px;height:86px;background:#c4c4ee"></div>
<div class="a" style="left:134.7px;top:457.7px;width:29.0px;height:4.0px;background:linear-gradient(90deg,#9a9af0,#dcdcfa)"></div>
<div class="a" style="left:134.7px;top:466.0px;width:41.0px;height:1px;background:repeating-linear-gradient(90deg,#bcbcee 0 2.5px,#e4e4f8 2.5px 3.2px,#c8c8f0 3.2px 5px,#f0f0fc 5px 5.6px)"></div>
<div class="a" style="left:134.7px;top:470.0px;width:41.0px;height:1px;background:repeating-linear-gradient(90deg,#bcbcee 0 2.5px,#e4e4f8 2.5px 3.2px,#c8c8f0 3.2px 5px,#f0f0fc 5px 5.6px)"></div>
<div class="a" style="left:134.7px;top:473.9px;width:41.0px;height:1px;background:repeating-linear-gradient(90deg,#bcbcee 0 2.5px,#e4e4f8 2.5px 3.2px,#c8c8f0 3.2px 5px,#f0f0fc 5px 5.6px)"></div>
<div class="a" style="left:134.7px;top:477.9px;width:41.0px;height:1px;background:repeating-linear-gradient(90deg,#bcbcee 0 2.5px,#e4e4f8 2.5px 3.2px,#c8c8f0 3.2px 5px,#f0f0fc 5px 5.6px)"></div>
<div class="a" style="left:134.7px;top:481.8px;width:41.0px;height:1px;background:repeating-linear-gradient(90deg,#bcbcee 0 2.5px,#e4e4f8 2.5px 3.2px,#c8c8f0 3.2px 5px,#f0f0fc 5px 5.6px)"></div>
<div class="a" style="left:134.7px;top:485.8px;width:14.0px;height:1px;background:repeating-linear-gradient(90deg,#bcbcee 0 2.5px,#e4e4f8 2.5px 3.2px,#c8c8f0 3.2px 5px,#f0f0fc 5px 5.6px)"></div>
<svg style="left:74px;top:436px" width="163" height="115"><circle cx="63.3" cy="61.7" r="2" fill="#f0f0fc" stroke="#ccccee" stroke-width="0.4"/><circle cx="72.7" cy="61.7" r="3" fill="#dcdcfa" stroke="#aaaae2" stroke-width="0.4"/><circle cx="84" cy="61.7" r="3.8" fill="#c4c4f8" stroke="#8a8ad8" stroke-width="0.4"/><circle cx="97.2" cy="61.7" r="4.8" fill="#b4b4f6" stroke="#6a6ad2" stroke-width="0.4"/><path d="M63.3 68 V71.5 M72.7 68 V71.5 M84 68 V71.5 M97.2 68 V71.5" stroke="#b0b0e0" stroke-width="0.5"/><path d="M61 75 H66 M70 75 H75 M81 75 H87 M94 75 H100" stroke="#c8c8ee" stroke-width="0.8"/></svg>
<div class="a" style="left:134.7px;top:517.0px;width:41.0px;height:1px;background:repeating-linear-gradient(90deg,#bcbcee 0 2.5px,#e4e4f8 2.5px 3.2px,#c8c8f0 3.2px 5px,#f0f0fc 5px 5.6px)"></div>
<div class="a" style="left:134.7px;top:521.0px;width:41.0px;height:1px;background:repeating-linear-gradient(90deg,#bcbcee 0 2.5px,#e4e4f8 2.5px 3.2px,#c8c8f0 3.2px 5px,#f0f0fc 5px 5.6px)"></div>
<div class="a" style="left:134.7px;top:525.0px;width:41.0px;height:1px;background:repeating-linear-gradient(90deg,#bcbcee 0 2.5px,#e4e4f8 2.5px 3.2px,#c8c8f0 3.2px 5px,#f0f0fc 5px 5.6px)"></div>
<div class="a" style="left:134.7px;top:529.0px;width:41.0px;height:1px;background:repeating-linear-gradient(90deg,#bcbcee 0 2.5px,#e4e4f8 2.5px 3.2px,#c8c8f0 3.2px 5px,#f0f0fc 5px 5.6px)"></div>
<div class="a" style="left:134.7px;top:533.0px;width:41.0px;height:1px;background:repeating-linear-gradient(90deg,#bcbcee 0 2.5px,#e4e4f8 2.5px 3.2px,#c8c8f0 3.2px 5px,#f0f0fc 5px 5.6px)"></div>
<div class="a" style="left:134.7px;top:537.0px;width:24.0px;height:1px;background:repeating-linear-gradient(90deg,#bcbcee 0 2.5px,#e4e4f8 2.5px 3.2px,#c8c8f0 3.2px 5px,#f0f0fc 5px 5.6px)"></div>
<div class="a" style="left:183.5px;top:456.4px;width:0.6px;height:86px;background:#c4c4ee"></div>
<div class="a" style="left:188.3px;top:458.0px;width:33.0px;height:4.0px;background:linear-gradient(90deg,#9a9af0,#dcdcfa)"></div>
<div class="a" style="left:188.3px;top:468.0px;width:40.0px;height:1px;background:repeating-linear-gradient(90deg,#bcbcee 0 2.5px,#e4e4f8 2.5px 3.2px,#c8c8f0 3.2px 5px,#f0f0fc 5px 5.6px)"></div>
<div class="a" style="left:188.3px;top:472.0px;width:40.0px;height:1px;background:repeating-linear-gradient(90deg,#bcbcee 0 2.5px,#e4e4f8 2.5px 3.2px,#c8c8f0 3.2px 5px,#f0f0fc 5px 5.6px)"></div>
<div class="a" style="left:188.3px;top:475.9px;width:40.0px;height:1px;background:repeating-linear-gradient(90deg,#bcbcee 0 2.5px,#e4e4f8 2.5px 3.2px,#c8c8f0 3.2px 5px,#f0f0fc 5px 5.6px)"></div>
<div class="a" style="left:188.3px;top:479.9px;width:40.0px;height:1px;background:repeating-linear-gradient(90deg,#bcbcee 0 2.5px,#e4e4f8 2.5px 3.2px,#c8c8f0 3.2px 5px,#f0f0fc 5px 5.6px)"></div>
<div class="a" style="left:188.3px;top:483.8px;width:40.0px;height:1px;background:repeating-linear-gradient(90deg,#bcbcee 0 2.5px,#e4e4f8 2.5px 3.2px,#c8c8f0 3.2px 5px,#f0f0fc 5px 5.6px)"></div>
<div class="a" style="left:188.3px;top:487.8px;width:40.0px;height:1px;background:repeating-linear-gradient(90deg,#bcbcee 0 2.5px,#e4e4f8 2.5px 3.2px,#c8c8f0 3.2px 5px,#f0f0fc 5px 5.6px)"></div>
<div class="a" style="left:188.3px;top:491.8px;width:40.0px;height:1px;background:repeating-linear-gradient(90deg,#bcbcee 0 2.5px,#e4e4f8 2.5px 3.2px,#c8c8f0 3.2px 5px,#f0f0fc 5px 5.6px)"></div>
<div class="a" style="left:188.3px;top:495.7px;width:40.0px;height:1px;background:repeating-linear-gradient(90deg,#bcbcee 0 2.5px,#e4e4f8 2.5px 3.2px,#c8c8f0 3.2px 5px,#f0f0fc 5px 5.6px)"></div>
<div class="a" style="left:188.3px;top:499.7px;width:40.0px;height:1px;background:repeating-linear-gradient(90deg,#bcbcee 0 2.5px,#e4e4f8 2.5px 3.2px,#c8c8f0 3.2px 5px,#f0f0fc 5px 5.6px)"></div>
<div class="a" style="left:188.3px;top:503.6px;width:40.0px;height:1px;background:repeating-linear-gradient(90deg,#bcbcee 0 2.5px,#e4e4f8 2.5px 3.2px,#c8c8f0 3.2px 5px,#f0f0fc 5px 5.6px)"></div>
<div class="a" style="left:188.3px;top:507.6px;width:18.0px;height:1px;background:repeating-linear-gradient(90deg,#bcbcee 0 2.5px,#e4e4f8 2.5px 3.2px,#c8c8f0 3.2px 5px,#f0f0fc 5px 5.6px)"></div>
<div class="a" style="left:74px;top:603px;width:163px;height:115px;background:#fff;border-radius:5px"></div>
<div class="a" style="left:81.0px;top:610.3px;width:40.0px;height:4.0px;background:linear-gradient(90deg,#9a9af0,#dcdcfa)"></div>
<div class="a" style="left:81.0px;top:619.6px;width:53.0px;height:1px;background:repeating-linear-gradient(90deg,#bcbcee 0 2.5px,#e4e4f8 2.5px 3.2px,#c8c8f0 3.2px 5px,#f0f0fc 5px 5.6px)"></div>
<div class="a" style="left:81.0px;top:623.6px;width:53.0px;height:1px;background:repeating-linear-gradient(90deg,#bcbcee 0 2.5px,#e4e4f8 2.5px 3.2px,#c8c8f0 3.2px 5px,#f0f0fc 5px 5.6px)"></div>
<div class="a" style="left:81.0px;top:627.5px;width:53.0px;height:1px;background:repeating-linear-gradient(90deg,#bcbcee 0 2.5px,#e4e4f8 2.5px 3.2px,#c8c8f0 3.2px 5px,#f0f0fc 5px 5.6px)"></div>
<div class="a" style="left:81.0px;top:631.5px;width:53.0px;height:1px;background:repeating-linear-gradient(90deg,#bcbcee 0 2.5px,#e4e4f8 2.5px 3.2px,#c8c8f0 3.2px 5px,#f0f0fc 5px 5.6px)"></div>
<div class="a" style="left:81.0px;top:635.4px;width:53.0px;height:1px;background:repeating-linear-gradient(90deg,#bcbcee 0 2.5px,#e4e4f8 2.5px 3.2px,#c8c8f0 3.2px 5px,#f0f0fc 5px 5.6px)"></div>
<div class="a" style="left:81.0px;top:639.4px;width:8.0px;height:1px;background:repeating-linear-gradient(90deg,#bcbcee 0 2.5px,#e4e4f8 2.5px 3.2px,#c8c8f0 3.2px 5px,#f0f0fc 5px 5.6px)"></div>
<svg style="left:74px;top:603px" width="163" height="115"><rect x="30" y="49" width="6" height="2.2" fill="#9c9cf0"/><rect x="38" y="49" width="6" height="2.2" fill="#9c9cf0"/><rect x="35.5" y="47.5" width="3" height="4" fill="#7070e0"/><path d="M36 52 L19 65 M38 52 L52 65" stroke="#6060d0" stroke-width="0.5"/><path d="M13 71 Q16 60 24 63 L20 71 Z" fill="#a8a8f4" stroke="#6060d0" stroke-width="0.4"/><path d="M56 71 Q53 60 45 63 L49 71 Z" fill="#a8a8f4" stroke="#6060d0" stroke-width="0.4"/><path d="M12 72 H25 M44 72 H57" stroke="#6060d0" stroke-width="0.5"/></svg>
<div class="a" style="left:81.0px;top:682.7px;width:54.0px;height:1px;background:repeating-linear-gradient(90deg,#bcbcee 0 2.5px,#e4e4f8 2.5px 3.2px,#c8c8f0 3.2px 5px,#f0f0fc 5px 5.6px)"></div>
<div class="a" style="left:81.0px;top:686.7px;width:54.0px;height:1px;background:repeating-linear-gradient(90deg,#bcbcee 0 2.5px,#e4e4f8 2.5px 3.2px,#c8c8f0 3.2px 5px,#f0f0fc 5px 5.6px)"></div>
<div class="a" style="left:81.0px;top:690.7px;width:54.0px;height:1px;background:repeating-linear-gradient(90deg,#bcbcee 0 2.5px,#e4e4f8 2.5px 3.2px,#c8c8f0 3.2px 5px,#f0f0fc 5px 5.6px)"></div>
<div class="a" style="left:81.0px;top:694.7px;width:54.0px;height:1px;background:repeating-linear-gradient(90deg,#bcbcee 0 2.5px,#e4e4f8 2.5px 3.2px,#c8c8f0 3.2px 5px,#f0f0fc 5px 5.6px)"></div>
<div class="a" style="left:81.0px;top:698.6px;width:54.0px;height:1px;background:repeating-linear-gradient(90deg,#bcbcee 0 2.5px,#e4e4f8 2.5px 3.2px,#c8c8f0 3.2px 5px,#f0f0fc 5px 5.6px)"></div>
<div class="a" style="left:81.0px;top:702.6px;width:54.0px;height:1px;background:repeating-linear-gradient(90deg,#bcbcee 0 2.5px,#e4e4f8 2.5px 3.2px,#c8c8f0 3.2px 5px,#f0f0fc 5px 5.6px)"></div>
<div class="a" style="left:81.0px;top:706.6px;width:32.0px;height:1px;background:repeating-linear-gradient(90deg,#bcbcee 0 2.5px,#e4e4f8 2.5px 3.2px,#c8c8f0 3.2px 5px,#f0f0fc 5px 5.6px)"></div>
<div class="a" style="left:144.5px;top:610px;width:0.6px;height:102px;background:#c4c4ee"></div>
<div class="a" style="left:149.0px;top:610.3px;width:14.7px;height:4.0px;background:linear-gradient(90deg,#9a9af0,#dcdcfa)"></div>
<div class="a" style="left:149.0px;top:619.0px;width:47.0px;height:1px;background:repeating-linear-gradient(90deg,#bcbcee 0 2.5px,#e4e4f8 2.5px 3.2px,#c8c8f0 3.2px 5px,#f0f0fc 5px 5.6px)"></div>
<div class="a" style="left:149.0px;top:623.0px;width:47.0px;height:1px;background:repeating-linear-gradient(90deg,#bcbcee 0 2.5px,#e4e4f8 2.5px 3.2px,#c8c8f0 3.2px 5px,#f0f0fc 5px 5.6px)"></div>
<div class="a" style="left:149.0px;top:626.9px;width:47.0px;height:1px;background:repeating-linear-gradient(90deg,#bcbcee 0 2.5px,#e4e4f8 2.5px 3.2px,#c8c8f0 3.2px 5px,#f0f0fc 5px 5.6px)"></div>
<div class="a" style="left:149.0px;top:630.9px;width:47.0px;height:1px;background:repeating-linear-gradient(90deg,#bcbcee 0 2.5px,#e4e4f8 2.5px 3.2px,#c8c8f0 3.2px 5px,#f0f0fc 5px 5.6px)"></div>
<div class="a" style="left:149.0px;top:634.9px;width:47.0px;height:1px;background:repeating-linear-gradient(90deg,#bcbcee 0 2.5px,#e4e4f8 2.5px 3.2px,#c8c8f0 3.2px 5px,#f0f0fc 5px 5.6px)"></div>
<div class="a" style="left:149.0px;top:638.8px;width:47.0px;height:1px;background:repeating-linear-gradient(90deg,#bcbcee 0 2.5px,#e4e4f8 2.5px 3.2px,#c8c8f0 3.2px 5px,#f0f0fc 5px 5.6px)"></div>
<div class="a" style="left:149.0px;top:642.8px;width:47.0px;height:1px;background:repeating-linear-gradient(90deg,#bcbcee 0 2.5px,#e4e4f8 2.5px 3.2px,#c8c8f0 3.2px 5px,#f0f0fc 5px 5.6px)"></div>
<div class="a" style="left:149.0px;top:646.7px;width:47.0px;height:1px;background:repeating-linear-gradient(90deg,#bcbcee 0 2.5px,#e4e4f8 2.5px 3.2px,#c8c8f0 3.2px 5px,#f0f0fc 5px 5.6px)"></div>
<div class="a" style="left:149.0px;top:650.7px;width:26.0px;height:1px;background:repeating-linear-gradient(90deg,#bcbcee 0 2.5px,#e4e4f8 2.5px 3.2px,#c8c8f0 3.2px 5px,#f0f0fc 5px 5.6px)"></div>
<svg style="left:74px;top:603px" width="163" height="115"><g transform="rotate(40 102.5 81.8)"><rect x="74" y="76" width="57" height="11.5" fill="#9a9af2"/><path d="M78 76 V87.5 M82 76 V87.5 M86 76 V87.5 M90 76 V87.5 M94 76 V87.5 M111 76 V87.5 M115 76 V87.5 M119 76 V87.5 M123 76 V87.5 M127 76 V87.5 M74 81.8 H131" stroke="#c4c4fa" stroke-width="0.4"/><rect x="96" y="73" width="13" height="17.5" rx="2" fill="#6464e6"/><path d="M102.5 62 L108 73 H97 Z" fill="#7a7aee"/><path d="M96 96 Q102.5 104 109 96 L107 90.5 H98 Z" fill="#6a6ae6"/></g></svg>
<div class="a" style="left:74.5px;top:227px;font-size:13px;line-height:13px;color:#eee">1</div>
<div class="a" style="left:223px;top:232px;width:2.4px;height:2.4px;background:#eee;box-shadow:4.3px 0 0 #eee,8.6px 0 0 #eee"></div>
<div class="a" style="left:74.5px;top:394px;font-size:13px;line-height:13px;color:#eee">2</div>
<div class="a" style="left:223px;top:399px;width:2.4px;height:2.4px;background:#eee;box-shadow:4.3px 0 0 #eee,8.6px 0 0 #eee"></div>
<div class="a" style="left:74.5px;top:561px;font-size:13px;line-height:13px;color:#eee">3</div>
<div class="a" style="left:223px;top:566px;width:2.4px;height:2.4px;background:#eee;box-shadow:4.3px 0 0 #eee,8.6px 0 0 #eee"></div>
<div class="a" style="left:74.5px;top:728px;font-size:13px;line-height:13px;color:#eee">4</div>
<div class="a" style="left:223px;top:733px;width:2.4px;height:2.4px;background:#eee;box-shadow:4.3px 0 0 #eee,8.6px 0 0 #eee"></div>
<!-- left rail icons -->
<svg style="left:12.5px;top:53.5px" width="17" height="17" viewBox="0 0 17 17"><g fill="none" stroke="#ddd" stroke-width="1.2"><circle cx="4" cy="4" r="3.2"/><circle cx="13" cy="4" r="3.2"/><circle cx="4" cy="13" r="3.2"/><circle cx="13" cy="13" r="3.2"/></g></svg>
<div class="a" style="left:12px;top:90px;width:16px;height:1px;background:#444"></div>
<svg style="left:11px;top:108px" width="20" height="20" viewBox="0 0 20 20"><circle cx="8" cy="8" r="7.2" fill="none" stroke="#6a6a6a" stroke-width="1.3"/><path d="M13.2 13.2 L19 19" stroke="#6a6a6a" stroke-width="1.3"/></svg>
<div class="a" style="left:5px;top:147px;width:32px;height:32px;border-radius:8px;background:#7676f2"></div>
<svg style="left:13px;top:154px" width="16" height="18" viewBox="0 0 16 18"><path d="M3.5 0.8 H10.5 L15.2 5.5 V14.5 Q15.2 17.2 12.5 17.2 H3.5 Q0.8 17.2 0.8 14.5 V3.5 Q0.8 0.8 3.5 0.8 Z M10.5 0.8 V3.5 Q10.5 5.5 12.5 5.5 H15.2" fill="none" stroke="#fff" stroke-width="1.3" stroke-linejoin="round"/></svg>
<svg style="left:13px;top:197px" width="16" height="20" viewBox="0 0 16 20"><path d="M2.5 0.7 H13.5 Q15.2 0.7 15.2 2.5 V18.8 L8 13 L0.8 18.8 V2.5 Q0.8 0.7 2.5 0.7 Z" fill="none" stroke="#6a6a6a" stroke-width="1.2" stroke-linejoin="round"/></svg>
<svg style="left:10px;top:240px" width="22" height="20" viewBox="0 0 22 20"><path d="M11 1 C5.5 1 1 4.5 1 9 C1 13.5 5.5 17 11 17 C12.5 17 13.5 16.8 14.5 16.5 L18 18.5 L17.5 15.2 C20 13.8 21 11.5 21 9 C21 4.5 16.5 1 11 1 Z" fill="none" stroke="#6a6a6a" stroke-width="1.2"/><path d="M7 6.5 V11.5 M11 6.5 V11.5 M15 6.5 V11.5" stroke="#6a6a6a" stroke-width="1.2"/></svg>
<svg style="left:12px;top:285px" width="18" height="20" viewBox="0 0 18 20"><path d="M15 7 L7.5 15 Q5 17.5 3 15.5 Q1 13.5 3.5 11 L11.5 3 Q13.5 1 15.5 2.5 Q17.2 4.5 15 6.5 L8 14 Q6.8 15 6 14.2 Q5.2 13.4 6.5 12 L12 6.5" fill="none" stroke="#6a6a6a" stroke-width="1.2" stroke-linecap="round"/></svg>
<svg style="left:13px;top:730px" width="18" height="18" viewBox="0 0 18 18"><path d="M3.5 0.8 Q5.8 0.8 5.8 3 V15 Q5.8 17.2 3.3 17.2 Q0.8 17.2 0.8 15 V3 Q0.8 0.8 3.5 0.8 Z" fill="none" stroke="#eee" stroke-width="1.2"/><path d="M6.5 2.5 L8.5 1.8 Q10.5 2.2 11.5 5 L7 12.5 M7.5 11.5 L12.5 7 Q14 6.5 16 8 Q17.8 10 16 11.5 L5.5 17" fill="none" stroke="#eee" stroke-width="1.2" stroke-linejoin="round"/><circle cx="3.3" cy="14.5" r="0.6" fill="#eee"/></svg>

<!-- thumbnail header -->
<div class="a" style="left:147px;top:41px;width:2px;height:4px;background:#777;box-shadow:7px 0 0 #777,14px 0 0 #777"></div>
<svg style="left:227px;top:52.5px" width="14" height="20" viewBox="0 0 14 20"><path d="M3.5 0.5 H10.5 Q11.2 0.5 11 1.5 L10.2 3 V7 Q13.6 8.8 13.6 11.5 V12.8 H0.4 V11.5 Q0.4 8.8 3.8 7 V3 L3 1.5 Q2.8 0.5 3.5 0.5 Z" fill="#7b7bf5"/><rect x="6.2" y="12.5" width="1.6" height="7" rx="0.5" fill="#7b7bf5"/></svg>

<!-- center toolbar -->
<div class="a" style="left:271px;top:42px;width:113px;height:40px;border:1px solid #434343;border-radius:8px;background:#313131"></div>
<svg style="left:283px;top:51px" width="20" height="21" viewBox="0 0 20 21"><g fill="none" stroke="#eee" stroke-width="1.15" stroke-linejoin="round"><path d="M1.2 8.5 H18.8 V17.3 L16.3 19.9 H3.7 L1.2 17.3 Z"/><path d="M1.3 6.6 L5.5 2.2 L9.2 7.7 Z"/><path d="M12.4 7.7 L15 4.2 L17.5 7.7 Z"/><path d="M11.4 0.4 L12.2 1.7 L13.5 2.5 L12.2 3.3 L11.4 4.6 L10.6 3.3 L9.3 2.5 L10.6 1.7 Z" stroke-width="0.9"/><rect x="6" y="11.2" width="7.8" height="2.6" rx="1.3"/></g></svg>

<div class="a" style="left:400px;top:42px;width:469px;height:40px;border:1px solid #434343;border-radius:8px;background:#313131;overflow:hidden"></div>
<svg style="left:410px;top:50px" width="20" height="23" viewBox="0 0 20 23"><g fill="none" stroke="#eee" stroke-width="1.1"><path d="M6.5 16.2 H5 Q1.3 16.2 1.3 12.5 V4.7 Q1.3 1 5 1 H9.9 Q13.6 1 13.6 4.7 V8.3"/><rect x="6.5" y="8.3" width="12.5" height="8" rx="3"/><path d="M1.3 20.6 H19 M1.3 19.2 V22 M19 19.2 V22"/></g></svg>
<svg style="left:532px;top:53px" width="18" height="18" viewBox="0 0 18 18"><path d="M1.5 6.5 V1.5 H6.5 M1.5 1.5 L7 7 M11.5 1.5 H16.5 V6.5 M16.5 1.5 L11 7 M1.5 11.5 V16.5 H6.5 M1.5 16.5 L7 11 M11.5 16.5 H16.5 V11.5 M16.5 16.5 L11 11" fill="none" stroke="#eee" stroke-width="1"/></svg>
<div class="a" style="left:755px;top:46px;width:73px;height:32px;border-radius:7px;background:#474977"></div>
<div class="a" style="left:836px;top:46px;width:29px;height:32px;border-radius:7px 0 0 7px;background:#3f3f3f;overflow:hidden"><div class="a" style="left:8px;top:9.5px;font-size:12px;line-height:14px;color:#eee;white-space:nowrap;transform:scaleX(0.9);transform-origin:0 0">Schließen</div></div>

<div class="a" style="left:886px;top:42px;width:94px;height:40px;border:1px solid #434343;border-radius:8px;background:#313131"></div>
<svg style="left:900px;top:53px" width="17" height="19" viewBox="0 0 17 19"><path d="M4 0.7 H13 Q16.2 0.7 16.2 4 V15 Q16.2 18.3 13 18.3 H4 Q0.7 18.3 0.7 15 V4 Q0.7 0.7 4 0.7 Z" fill="none" stroke="#eee" stroke-width="1.2"/><path d="M5 0.7 V2.5 Q5 4.2 6.8 4.2 H10.2 Q12 4.2 12 2.5 V0.7" fill="none" stroke="#eee" stroke-width="1.2"/><circle cx="8.5" cy="11.2" r="2.3" fill="none" stroke="#eee" stroke-width="1.2"/></svg>
<svg style="left:927px;top:59px" width="8" height="5"><path d="M0.5 0.5 L4 4 L7.5 0.5" fill="none" stroke="#aaa" stroke-width="1.2"/></svg>
<div class="a" style="left:946.5px;top:50px;width:23px;height:23px;border-radius:50%;background:linear-gradient(180deg,#5c6cf6 0%,#3d88ec 55%,#22b2d6 100%)"></div>
<svg style="left:946.5px;top:50px" width="23" height="23" viewBox="0 0 23 23"><g fill="none" stroke="#eaffff" stroke-width="1"><ellipse cx="11.5" cy="11.8" rx="7.6" ry="4.4" stroke-dasharray="10 2.5"/><ellipse cx="11.5" cy="11.8" rx="4.4" ry="7.6" stroke-dasharray="10 2.5" stroke-dashoffset="5"/></g><circle cx="11.5" cy="11.8" r="1.4" fill="#eaffff"/></svg>
<div class="a" style="left:977px;top:41px;width:5px;height:20px;border-radius:3px;background:#5a5a5a"></div>

<!-- right panel content -->
<div class="a" style="left:1002px;top:94px;width:264px;height:31px;background:#202020;border:1px solid #3a3a3a;border-radius:7px"></div>
<svg style="left:1245px;top:107px" width="8" height="5"><path d="M0.5 0.5 L4 4 L7.5 0.5" fill="none" stroke="#bbb" stroke-width="1.2"/></svg>
<div class="a" style="left:993px;top:84px;width:280px;height:56px;border:6px solid #ff5a00;border-top-width:7px"></div>
<div class="a" style="left:1002px;top:142px;width:264px;height:1px;background:#474747"></div>
<div class="a" style="left:1227px;top:165px;width:39px;height:20px;border-radius:10px;background:#474747"></div>
<div class="a" style="left:1228px;top:167px;width:16px;height:16px;border-radius:50%;background:#fff"></div>

<div class="a" style="left:994px;top:222px;width:283px;height:213px;border:6px solid #ff5a00"></div>
<svg style="left:1010px;top:277px" width="16" height="13"><path d="M0 0.7 H16" stroke="#eee" stroke-width="1.3"/><rect x="2.7" y="4.6" width="10.3" height="7.4" rx="3" fill="none" stroke="#eee" stroke-width="1.2"/></svg>
<div class="a" style="left:1179px;top:267px;width:86px;height:30px;background:#262626;border:1px solid #2e2e2e;border-radius:7px"></div>
<svg style="left:1245px;top:276px" width="8" height="14"><path d="M0.5 4 L4 0.7 L7.5 4" fill="none" stroke="#bbb" stroke-width="1.1"/><path d="M0.5 9 L4 12.3 L7.5 9" fill="none" stroke="#5a5a5a" stroke-width="1.1"/></svg>
<svg style="left:1010px;top:317px" width="16" height="13"><rect x="2.7" y="0.6" width="10.3" height="7.4" rx="3" fill="none" stroke="#eee" stroke-width="1.2"/><path d="M0 11.3 H16" stroke="#eee" stroke-width="1.3"/></svg>
<div class="a" style="left:1179px;top:307px;width:86px;height:30px;background:#262626;border:1px solid #2e2e2e;border-radius:7px"></div>
<svg style="left:1245px;top:316px" width="8" height="14"><path d="M0.5 4 L4 0.7 L7.5 4" fill="none" stroke="#bbb" stroke-width="1.1"/><path d="M0.5 9 L4 12.3 L7.5 9" fill="none" stroke="#5a5a5a" stroke-width="1.1"/></svg>
<svg style="left:1012px;top:357px" width="16" height="13"><path d="M0.7 -2 V14" stroke="#eee" stroke-width="1.3"/><rect x="4.6" y="1.5" width="7.4" height="10.3" rx="3" fill="none" stroke="#eee" stroke-width="1.2"/></svg>
<div class="a" style="left:1179px;top:347px;width:86px;height:30px;background:#262626;border:1px solid #2e2e2e;border-radius:7px"></div>
<svg style="left:1245px;top:356px" width="8" height="14"><path d="M0.5 4 L4 0.7 L7.5 4" fill="none" stroke="#bbb" stroke-width="1.1"/><path d="M0.5 9 L4 12.3 L7.5 9" fill="none" stroke="#5a5a5a" stroke-width="1.1"/></svg>
<svg style="left:1011.5px;top:397px" width="16" height="13"><rect x="0.6" y="1.5" width="7.4" height="10.3" rx="3" fill="none" stroke="#eee" stroke-width="1.2"/><path d="M11.3 -2 V14" stroke="#eee" stroke-width="1.3"/></svg>
<div class="a" style="left:1179px;top:387px;width:86px;height:30px;background:#262626;border:1px solid #2e2e2e;border-radius:7px"></div>
<svg style="left:1245px;top:396px" width="8" height="14"><path d="M0.5 4 L4 0.7 L7.5 4" fill="none" stroke="#bbb" stroke-width="1.1"/><path d="M0.5 9 L4 12.3 L7.5 9" fill="none" stroke="#5a5a5a" stroke-width="1.1"/></svg>

<div class="a" style="left:1227px;top:458px;width:39px;height:20px;border-radius:10px;background:#474747"></div>
<div class="a" style="left:1228px;top:460px;width:16px;height:16px;border-radius:50%;background:#fff"></div>
<div class="a" style="left:1002px;top:500px;width:264px;height:1px;background:#474747"></div>
<div class="a" style="left:1227px;top:523px;width:39px;height:20px;border-radius:10px;background:#474747"></div>
<div class="a" style="left:1228px;top:525px;width:16px;height:16px;border-radius:50%;background:#fff"></div>
<div id="t72" class="tx" style="transform:scaleX(1.0500);left:57.00px;top:13.76px;font-size:10.80px;line-height:10.80px;color:#eeeeee;font-family:'Liberation Sans',sans-serif">sample-UPDF*</div>
<div id="t73" class="tx" style="transform:scaleX(0.9780);left:62.30px;top:56.77px;font-size:12.20px;line-height:12.20px;color:#f0f0f0;font-family:'Liberation Sans',sans-serif;font-weight:bold">Seitenminiaturen</div>
<div id="t74" class="tx" style="transform:scaleX(0.9922);left:309.20px;top:56.39px;font-size:12.30px;line-height:12.30px;color:#f0f0f0;font-family:'Liberation Sans',sans-serif;font-weight:bold">Werkzeuge</div>
<div id="t75" class="tx" style="transform:scaleX(0.9897);left:436.20px;top:56.59px;font-size:12.30px;line-height:12.30px;color:#f0f0f0;font-family:'Liberation Sans',sans-serif;font-weight:bold">Seitenformat</div>
<div id="t76" class="tx" style="transform:scaleX(0.9365);left:557.40px;top:56.59px;font-size:12.30px;line-height:12.30px;color:#f0f0f0;font-family:'Liberation Sans',sans-serif;font-weight:bold">&#196;nderungen R&#252;ckg&#228;ngig Machen</div>
<div id="t77" class="tx" style="transform:scaleX(0.9926);left:763.00px;top:56.84px;font-size:12.00px;line-height:12.00px;color:#8a8cc4;font-family:'Liberation Sans',sans-serif">Anwenden</div>
<div id="t78" class="tx" style="transform:scaleX(1.0010);left:1002.00px;top:60.88px;font-size:11.60px;line-height:11.60px;color:#f0f0f0;font-family:'Liberation Sans',sans-serif;font-weight:bold">Seiten beschneiden</div>
<div id="t79" class="tx" style="transform:scaleX(1.0036);left:1011.70px;top:105.43px;font-size:11.30px;line-height:11.30px;color:#eeeeee;font-family:'Liberation Sans',sans-serif">R&#228;nder zuschneiden</div>
<div id="t80" class="tx" style="transform:scaleX(1.0476);left:1002.50px;top:170.18px;font-size:11.60px;line-height:11.60px;color:#f0f0f0;font-family:'Liberation Sans',sans-serif;font-weight:bold">Wei&#223;e R&#228;nder entfernen</div>
<div id="t81" class="tx" style="transform:scaleX(0.9873);left:1002.20px;top:238.98px;font-size:11.60px;line-height:11.60px;color:#f0f0f0;font-family:'Liberation Sans',sans-serif;font-weight:bold">Randeinstellungen</div>
<div id="t82" class="tx" style="transform:scaleX(1.0239);left:1038.00px;top:279.23px;font-size:11.30px;line-height:11.30px;color:#eeeeee;font-family:'Liberation Sans',sans-serif">Oben</div>
<div id="t83" class="tx" style="transform:scaleX(0.9955);left:1188.70px;top:278.63px;font-size:11.30px;line-height:11.30px;color:#eeeeee;font-family:'Liberation Sans',sans-serif">0.00</div>
<div id="t84" class="tx" style="transform:scaleX(1.0412);left:1038.00px;top:319.23px;font-size:11.30px;line-height:11.30px;color:#eeeeee;font-family:'Liberation Sans',sans-serif">Unten</div>
<div id="t85" class="tx" style="transform:scaleX(0.9955);left:1188.70px;top:318.63px;font-size:11.30px;line-height:11.30px;color:#eeeeee;font-family:'Liberation Sans',sans-serif">0.00</div>
<div id="t86" class="tx" style="transform:scaleX(1.0237);left:1038.00px;top:359.23px;font-size:11.30px;line-height:11.30px;color:#eeeeee;font-family:'Liberation Sans',sans-serif">Links</div>
<div id="t87" class="tx" style="transform:scaleX(0.9955);left:1188.70px;top:358.63px;font-size:11.30px;line-height:11.30px;color:#eeeeee;font-family:'Liberation Sans',sans-serif">0.00</div>
<div id="t88" class="tx" style="transform:scaleX(0.9837);left:1038.00px;top:399.23px;font-size:11.30px;line-height:11.30px;color:#eeeeee;font-family:'Liberation Sans',sans-serif">Rechts</div>
<div id="t89" class="tx" style="transform:scaleX(0.9955);left:1188.70px;top:398.63px;font-size:11.30px;line-height:11.30px;color:#eeeeee;font-family:'Liberation Sans',sans-serif">0.00</div>
<div id="t90" class="tx" style="transform:scaleX(1.0148);left:1002.50px;top:463.38px;font-size:11.60px;line-height:11.60px;color:#f0f0f0;font-family:'Liberation Sans',sans-serif;font-weight:bold">Proportionen beibehalten</div>
<div id="t91" class="tx" style="transform:scaleX(1.0155);left:1002.50px;top:528.18px;font-size:11.60px;line-height:11.60px;color:#f0f0f0;font-family:'Liberation Sans',sans-serif;font-weight:bold">&#196;nderungen Anwenden</div>
</body></html>
